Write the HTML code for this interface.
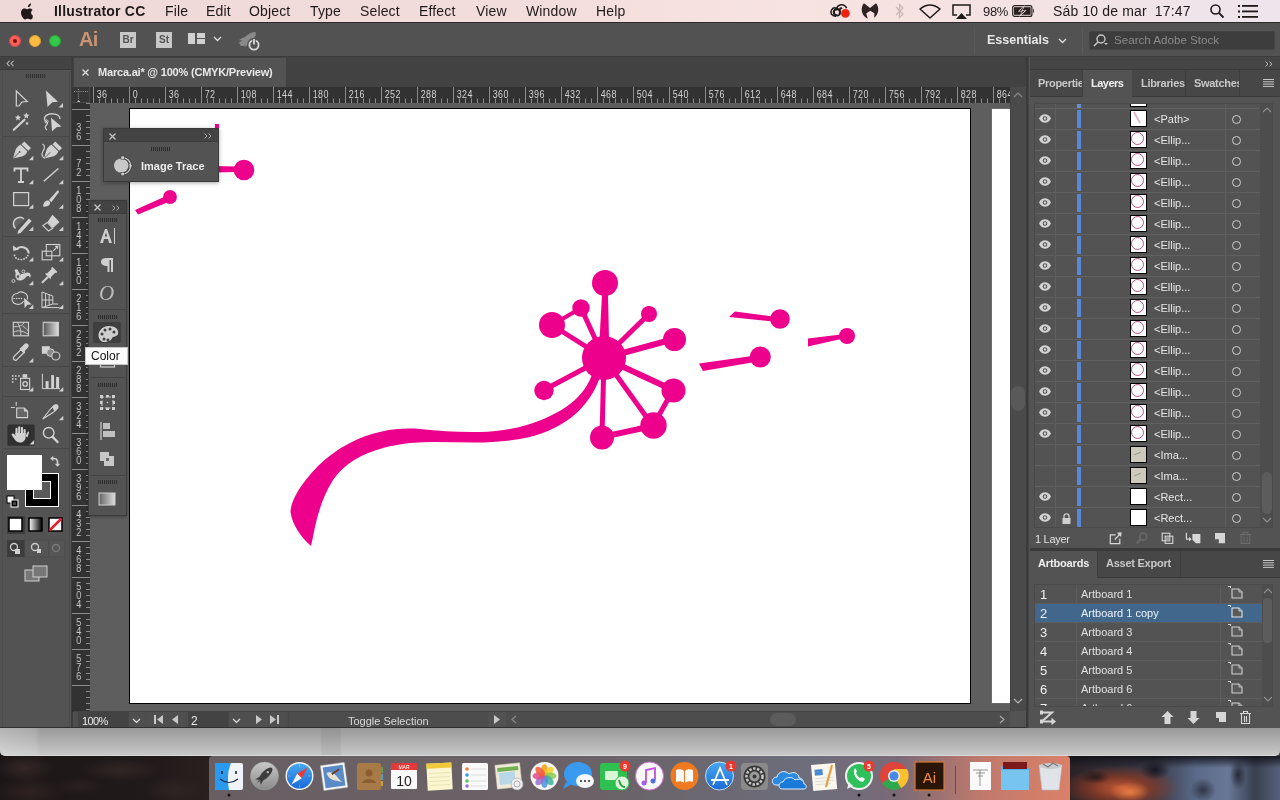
<!DOCTYPE html>
<html><head><meta charset="utf-8">
<style>
*{margin:0;padding:0;box-sizing:border-box}
html,body{width:1280px;height:800px;overflow:hidden;background:#2a2020;font-family:"Liberation Sans",sans-serif}
body>*{will-change:transform}
.a{position:absolute}
svg{position:absolute;overflow:visible}
#menubar{left:0;top:0;width:1280px;height:22px;background:linear-gradient(90deg,#efd8d8,#f3dddc 40%,#f7e3e0 62%,#f5e2e2 75%,#ede5ec);color:#1f1a1a;font-size:14px}
#menubar span{position:absolute;top:3px;white-space:nowrap;letter-spacing:0.15px}
#appbar{left:0;top:22px;width:1280px;height:35px;background:#525252;border-top:1px solid #2e2a2a;border-bottom:1px solid #3c3c3c}
#tools{left:0;top:57px;width:73px;height:671px;background:#535353}
#tabrow{left:73px;top:57px;width:953px;height:30px;background:#424242}
#canvas{left:75px;top:87px;width:935px;height:625px;background:#5b5b5b}
#rightp{left:1026px;top:57px;width:254px;height:671px;background:#535353}
#below{left:0;top:728px;width:1280px;height:24px;background:linear-gradient(#cfcfcf,#b5b5b5 60%,#a9a9a9)}
#dockbg{left:0;top:752px;width:1280px;height:48px;background:linear-gradient(90deg,#1e1616,#2a2020 40%,#4a3030 70%,#7a4030 85%,#3a3a48)}
.g{fill:#d8d8d8}
.gs{stroke:#d8d8d8;fill:none}
.tri{position:absolute;width:0;height:0;border-left:4px solid transparent;border-bottom:4px solid #d0d0d0}
</style></head><body>
<div id="dockbg" class="a"></div>
<div id="menubar" class="a">
  <svg style="left:20px;top:3px" width="15" height="17" viewBox="0 0 170 200"><path fill="#1f1a1a" d="M150 170c-8 12-17 24-30 24s-17-8-32-8-20 8-32 8-22-13-30-25C10 145 1 111 15 86c7-13 20-21 34-21 13 0 21 8 32 8s17-8 33-8c12 0 25 7 32 18-28 15-23 55 5 66-3 8-6 15-11 21zM117 35c6-8 11-18 10-29-9 0-20 6-27 14-6 7-11 17-10 28 10 1 20-5 27-13z"/></svg>
  <span style="left:54px;font-weight:bold;letter-spacing:0.2px">Illustrator CC</span>
  <span style="left:165px">File</span>
  <span style="left:206px">Edit</span>
  <span style="left:249px">Object</span>
  <span style="left:310px">Type</span>
  <span style="left:360px">Select</span>
  <span style="left:419px">Effect</span>
  <span style="left:476px">View</span>
  <span style="left:526px">Window</span>
  <span style="left:596px">Help</span>
  <!-- CC icon -->
  <svg style="left:829px;top:3px" width="22" height="16" viewBox="0 0 22 16">
    <path d="M7 13.2 C2.5 13.5 0.8 9.5 2.6 6.8 C3.8 5 6 4.6 7.6 5.2 C8.8 2 12.8 0.8 15.6 2.6 C16.6 3.2 17.3 4.2 17.6 5.2" fill="none" stroke="#1f1a1a" stroke-width="1.5"/>
    <circle cx="8" cy="9.3" r="3.2" fill="none" stroke="#1f1a1a" stroke-width="2.2"/>
    <path d="M6 8 L9.5 12" stroke="#f0dada" stroke-width="0.8"/>
    <path d="M10.5 6 L13 4.8" stroke="#1f1a1a" stroke-width="2"/>
    <circle cx="16.4" cy="10.4" r="4.6" fill="#f4e0e0"/>
    <circle cx="16.4" cy="10.4" r="4.3" fill="#f0200e"/>
  </svg>
  <!-- Malwarebytes -->
  <svg style="left:861px;top:3px" width="18" height="16" viewBox="0 0 18 16"><path d="M3 0.2 L9 5 L15 0.2 C18.2 4 18.4 10.5 13.2 14.8 L13.4 10.2 L9.2 7.8 L5.2 10.6 L6.8 15.8 C-0.4 12.2 -0.6 4 3 0.2Z" fill="#2e2222"/></svg>
  <!-- bluetooth faint -->
  <svg style="left:895px;top:3px" width="10" height="16" viewBox="0 0 10 16"><path d="M1 4 L8 11 L4.5 14.5 V1.5 L8 5 L1 12" fill="none" stroke="#c9b6b6" stroke-width="1.2"/></svg>
  <!-- wifi -->
  <svg style="left:919px;top:4px" width="22" height="15" viewBox="0 0 22 15"><path d="M1 5 Q11 -3 21 5 L11 14 Z" fill="none" stroke="#1f1a1a" stroke-width="1.5" stroke-linejoin="round"/></svg>
  <!-- airplay -->
  <svg style="left:952px;top:4px" width="19" height="15" viewBox="0 0 19 15"><path d="M5 11 H1 V1 H18 V11 H14" fill="none" stroke="#1f1a1a" stroke-width="1.5"/><path d="M4 15 L9.5 9 L15 15Z" fill="#1f1a1a"/></svg>
  <span style="left:983px;font-size:13px;letter-spacing:-0.3px;top:4px">98%</span>
  <!-- battery -->
  <svg style="left:1012px;top:5px" width="24" height="12" viewBox="0 0 24 12"><rect x="0.7" y="0.6" width="19.2" height="10.8" rx="2" fill="none" stroke="#2a2020" stroke-width="1.2"/><rect x="2" y="2.2" width="16.6" height="7.6" fill="#2a2020"/><path d="M12.8 0 L5.8 6.6 H9.6 L7.2 12 L14.6 5.2 H10.8 Z" fill="#f2dede"/><path d="M11.6 1.8 L7.6 5.8 H10.6 L8.8 9.6 L12.8 5.8 H9.8 Z" fill="#2a2020"/><path d="M21 3.8 C22.2 4.2 22.2 7.8 21 8.2Z" fill="#2a2020"/></svg>
  <span style="left:1053px">Sáb 10 de mar&nbsp; 17:47</span>
  <svg style="left:1210px;top:4px" width="14" height="14" viewBox="0 0 14 14"><circle cx="5.5" cy="5.5" r="4.5" fill="none" stroke="#1f1a1a" stroke-width="1.6"/><path d="M9 9 L13.5 13.5" stroke="#1f1a1a" stroke-width="1.8"/></svg>
  <svg style="left:1238px;top:5px" width="20" height="13" viewBox="0 0 20 13"><g fill="#1f1a1a"><rect x="0" y="0" width="2" height="2"/><rect x="0" y="5.5" width="2" height="2"/><rect x="0" y="11" width="2" height="2"/><rect x="4" y="0" width="16" height="1.8"/><rect x="4" y="5.5" width="16" height="1.8"/><rect x="4" y="11" width="16" height="1.8"/></g></svg>
</div>
<div id="appbar" class="a">
  <div class="a" style="left:9px;top:12px;width:12px;height:12px;border-radius:50%;background:#fc605c;border:1px solid #de4a46"><div class="a" style="left:3px;top:3px;width:4px;height:4px;border-radius:50%;background:#7a0a08"></div></div>
  <div class="a" style="left:29px;top:12px;width:12px;height:12px;border-radius:50%;background:#fdbc40;border:1px solid #de9f34"></div>
  <div class="a" style="left:49px;top:12px;width:12px;height:12px;border-radius:50%;background:#34c84a;border:1px solid #27aa35"></div>
  <div class="a" style="left:79px;top:5px;font-size:20px;font-weight:bold;color:#c99474;letter-spacing:-0.8px">Ai</div>
  <div class="a" style="left:120px;top:9px;width:16px;height:16px;background:#c8c8c8;color:#555;font-size:10px;font-weight:bold;text-align:center;line-height:16px">Br</div>
  <div class="a" style="left:156px;top:9px;width:16px;height:16px;background:#c8c8c8;color:#555;font-size:10px;font-weight:bold;text-align:center;line-height:16px">St</div>
  <div class="a" style="left:188px;top:10px;width:7px;height:11px;background:#d0d0d0"></div>
  <div class="a" style="left:197px;top:10px;width:8px;height:5px;background:#d0d0d0"></div>
  <div class="a" style="left:197px;top:16px;width:8px;height:5px;background:#d0d0d0"></div>
  <svg style="left:213px;top:13px" width="9" height="6" viewBox="0 0 9 6"><path d="M1 1 L4.5 4.5 L8 1" fill="none" stroke="#e0e0e0" stroke-width="1.3"/></svg>
  <svg style="left:236px;top:6px" width="28" height="24" viewBox="0 0 28 24"><g fill="#8a8a8a"><ellipse cx="12" cy="10" rx="10" ry="3.6" transform="rotate(-40 12 10)"/><path d="M3 11 L8 8 L9 12Z M8 18 L11 13 L14 15Z"/><path d="M2 14 L6 12 L5 15Z"/></g><circle cx="18" cy="16" r="5" fill="none" stroke="#525252" stroke-width="4"/><circle cx="18" cy="16" r="4.6" fill="none" stroke="#d8d8d8" stroke-width="1.8"/><path d="M18 9.5 V15.5" stroke="#525252" stroke-width="3.4"/><path d="M18 10 V15.5" stroke="#d8d8d8" stroke-width="1.8"/></svg>
  <div class="a" style="left:974px;top:4px;width:1px;height:27px;background:#5a5a5a"></div>
  <div class="a" style="left:987px;top:10px;font-size:12.5px;font-weight:bold;color:#e6e6e6">Essentials</div>
  <svg style="left:1058px;top:15px" width="9" height="6" viewBox="0 0 9 6"><path d="M1 1 L4.5 4.5 L8 1" fill="none" stroke="#e0e0e0" stroke-width="1.3"/></svg>
  <div class="a" style="left:1082px;top:4px;width:1px;height:27px;background:#5a5a5a"></div>
  <div class="a" style="left:1089px;top:8px;width:186px;height:19px;background:#3d3d3d;border:1px solid #444;border-radius:2px"></div>
  <svg style="left:1093px;top:11px" width="16" height="13" viewBox="0 0 16 13"><circle cx="8" cy="5" r="4" fill="none" stroke="#c8c8c8" stroke-width="1.4"/><path d="M5 8 L1 12" stroke="#c8c8c8" stroke-width="1.6"/><path d="M11 9 H15 L13 11Z" fill="#c8c8c8"/></svg>
  <div class="a" style="left:1114px;top:10px;font-size:11.6px;color:#8a8a8a">Search Adobe Stock</div>
</div>
<div id="tools" class="a">
  <div class="a" style="left:0;top:0;width:73px;height:13px;background:#434343;border-bottom:1px solid #383838"></div>
  <svg style="left:6px;top:3px" width="9" height="7" viewBox="0 0 9 7"><path d="M3.5 0.8 L1 3.5 L3.5 6.2 M7.5 0.8 L5 3.5 L7.5 6.2" fill="none" stroke="#b8b8b8" stroke-width="1.1"/></svg>
  <div class="a" style="left:71px;top:0;width:2px;height:671px;background:#3d3d3d"></div>
  <div class="a" style="left:2px;top:14px;width:68px;height:660px;border-left:1px solid #4c4c4c;border-right:1px solid #4c4c4c"></div>
  <div class="a" style="left:26px;top:17px;width:20px;height:4px;background:repeating-linear-gradient(90deg,#2e2e2e 0 1px,transparent 1px 2px)"></div>
  <!-- separators -->
  <div class="a" style="left:3px;top:79px;width:67px;height:1px;background:#474747"></div>
  <div class="a" style="left:3px;top:179px;width:67px;height:1px;background:#474747"></div>
  <div class="a" style="left:3px;top:256px;width:67px;height:1px;background:#474747"></div>
  <div class="a" style="left:3px;top:309px;width:67px;height:1px;background:#474747"></div>
  <div class="a" style="left:3px;top:339px;width:67px;height:1px;background:#474747"></div>
  <div class="a" style="left:3px;top:391px;width:67px;height:1px;background:#474747"></div>
</div>
<!-- tool icons in page coords -->
<svg style="left:0;top:80px" width="73" height="520" viewBox="0 80 73 520">
  <g fill="#d2d2d2" stroke="#d2d2d2">
  <!-- selection outline -->
  <path d="M16.3 91 L27.3 101.5 L22 102 L19 106 L16.3 106Z" fill="none" stroke-width="1.2" stroke-linejoin="miter"/>
  <!-- direct selection filled -->
  <path d="M46 90.5 L58 101.8 L52.3 102.3 L47.5 107Z" stroke="none"/>
  <!-- magic wand -->
  <path d="M13.8 129.8 L24.5 119.8" stroke-width="2.2" stroke-linecap="round"/>
  <path d="M18 114.5 l0.9 2.1 2.2 0.2 -1.7 1.4 0.5 2.2 -1.9-1.2 -1.9 1.2 0.5-2.2 -1.7-1.4 2.2-0.2z M26.3 112.5 l0.9 2.1 2.2 0.2 -1.7 1.4 0.5 2.2 -1.9-1.2 -1.9 1.2 0.5-2.2 -1.7-1.4 2.2-0.2z M27 121.5 l0.6 1.2 1.3 0.1 -1 0.8 0.3 1.3 -1.2-0.7 -1.2 0.7 0.3-1.3 -1-0.8 1.3-0.1z" stroke="none"/>
  <!-- lasso -->
  <path d="M45 120.5 C43 116 48 113.5 53 113.8 C57 114 60 116 60 119" fill="none" stroke-width="1.3"/>
  <path d="M45 120.5 C48 122 48 124 46 125.5 C44.5 127 45.5 129 47 130" fill="none" stroke-width="1.2"/>
  <circle cx="46.5" cy="121.5" r="1.6" fill="none" stroke-width="1"/>
  <path d="M51 117.8 L61.5 126.5 L56.5 127.2 L52 131.2Z" stroke="none"/>
  <!-- pen -->
  <path d="M13 158.5 L15.3 150.5 Q16.6 146.6 21.2 144.6 L27.6 151 Q25.8 155.6 21.8 156.6Z" stroke="none"/>
  <path d="M21.6 144.2 L24.3 141.4 L31 148 L28.2 150.8Z" stroke="none"/>
  <path d="M20.8 144.6 L28 151.6" stroke="#535353" stroke-width="0.9"/>
  <path d="M13.4 158.2 L19.2 152.3" stroke="#535353" stroke-width="0.9"/>
  <circle cx="19.6" cy="151.9" r="0.9" fill="#535353" stroke="none"/>
  <!-- curvature pen -->
  <path d="M44 158.5 L46.3 150.5 Q47.6 146.6 52.2 144.6 L58.6 151 Q56.8 155.6 52.8 156.6Z" stroke="none"/>
  <path d="M52.6 144.2 L55.3 141.4 L62 148 L59.2 150.8Z" stroke="none"/>
  <path d="M51.8 144.6 L59 151.6" stroke="#535353" stroke-width="0.9"/>
  <path d="M44.4 158.2 L50.2 152.3" stroke="#535353" stroke-width="0.9"/>
  <path d="M42.5 144 C45.5 145.5 44.5 149 42.8 151.5 C41 154.5 42.5 157.5 45 158.3" fill="none" stroke-width="1.1"/>
  <!-- type T -->
  <path d="M14.5 171.5 V168.5 H27.5 V171.5 M21 168.5 V182 M18 182 H24" fill="none" stroke-width="1.8"/>
  <!-- line -->
  <path d="M43.8 181.3 L58.4 168.5" stroke-width="1.4"/>
  <!-- rectangle -->
  <rect x="13.6" y="192.6" width="15" height="13" fill="#5e5e5e" stroke-width="1.2"/>
  <!-- paintbrush -->
  <path d="M43 206.6 C43.5 202 45.5 200.5 48.5 200.5 L50 202 C50.5 205 48 207 43 206.6Z" stroke="none"/>
  <path d="M49 200 L57 191 C58 190 59.5 191 58.8 192.2 L51.3 202.3Z" stroke="none"/>
  <!-- shaper -->
  <path d="M24 219 A6.2 6.2 0 1 0 15.5 228.5" fill="#626262" stroke-width="1.5"/>
  <path d="M18.2 230.8 L29 218.6 L31.6 221 L20.6 233Z M18.2 230.8 L17.4 233.8 L20.6 233Z" stroke="none"/>
  <!-- eraser -->
  <path d="M47.5 222 L52.4 214.8 L59.6 221.9 L53 228Z" stroke="none"/>
  <path d="M47.3 222.5 L52.7 228.3 L48.4 231 L42.9 225.6Z" fill="none" stroke-width="1.1"/>
  <!-- rotate -->
  <path d="M16.5 249.2 A7.2 7.2 0 0 1 28.8 253.5" fill="none" stroke-width="2"/>
  <path d="M12.8 245.4 L13.4 251 L19 249.5Z" stroke="none"/>
  <g stroke="none"><circle cx="14.5" cy="255.5" r="0.9"/><circle cx="16" cy="258" r="0.9"/><circle cx="18.5" cy="259.2" r="0.9"/><circle cx="21.3" cy="259.6" r="0.9"/><circle cx="24" cy="259" r="0.9"/><circle cx="26.3" cy="257.7" r="0.9"/><circle cx="27.8" cy="255.6" r="0.9"/></g>
  <!-- scale -->
  <rect x="46.3" y="244.5" width="13.5" height="11.3" fill="none" stroke-width="1.1"/>
  <rect x="42.2" y="251.2" width="9.6" height="8.6" fill="none" stroke-width="1.1"/>
  <path d="M53.4 250.8 L57.8 246.2" stroke-width="1.1"/><path d="M58.4 245.5 L54.6 246 L57.9 249.3Z" stroke="none"/>
  <!-- puppet warp -->
  <path d="M14.5 270.5 C15.5 268.5 18 269 18.5 271.5 C19.5 274 21.5 274.5 24 273.5 C26 272.5 28 272 29.5 273 C31 274 31 276.5 30 278 C29.5 276 28 275.5 26.5 276.5 C25 278.5 23 280.5 20 280.5 C17 280.5 15.5 278.5 15.5 276 C15.5 274 16 272 14.5 270.5Z" stroke="none"/>
  <path d="M13.4 281 L23.4 271.4" stroke="#535353" stroke-width="0.9"/>
  <circle cx="23.4" cy="271.4" r="1.5" fill="#535353" stroke-width="0.9"/>
  <circle cx="18" cy="276.6" r="1.9" fill="#535353" stroke-width="1.1"/>
  <circle cx="13.4" cy="281" r="1.5" fill="#535353" stroke-width="0.9"/>
  <!-- pin -->
  <path d="M45 273.8 L47.5 273 L51.5 269 L51.2 267.8 L52.4 266.9 L57.3 271.8 L56.4 273 L55.2 272.7 L51.2 276.7 L50.4 279.2 Z" stroke="none"/>
  <path d="M42.4 282.4 L47.6 277.2" stroke-width="2" stroke-linecap="round"/>
  <!-- shape builder -->
  <path d="M19 304.5 C14.5 304.5 12 302 12 298.8 C12 295.5 14.5 293.3 17.5 293.5 C19 291.8 22 291.6 24.2 292.8 C27 294.2 28 297 27.3 299.5" fill="none" stroke-width="1.1"/>
  <path d="M17.4 304.5 C20 304.5 22.5 303 23.5 301" fill="none" stroke-width="1.1"/>
  <g stroke="none"><circle cx="14.3" cy="298.5" r="0.8"/><circle cx="16.7" cy="298.5" r="0.8"/><circle cx="19.1" cy="298.5" r="0.8"/><circle cx="21.5" cy="298.5" r="0.8"/></g>
  <path d="M24 297.8 L31.8 304.4 L27.6 304.8 L24.6 308Z" stroke="none"/>
  <!-- perspective grid -->
  <path d="M42 292 L52.8 296 V304 L42 307.6Z M45.6 293.3 V306.4 M49.2 294.6 V305.2 M42 300 H52.8 M42 307.6 H59.5 M52.8 304 H58" fill="none" stroke-width="1"/>
  <!-- mesh -->
  <rect x="13.3" y="322.3" width="15.2" height="13.5" fill="#5c5c5c" stroke-width="1.1"/>
  <path d="M14 332 C18 330 22 330.5 28 334 M13.5 326.5 C17 327 21 326.5 24 323 M17.5 322.5 C19.5 326 21.5 330 20.5 335.5 M22.5 326 C25 327.5 27 329 28 331" fill="none" stroke-width="0.9"/>
  <!-- gradient tool -->
  <rect x="43.2" y="322.3" width="15.2" height="13.5" fill="url(#gr1)" stroke-width="1.1"/>
  <!-- eyedropper -->
  <path d="M14.3 359.8 C13 358.5 13.2 357.3 14.2 356.3 L21.5 349 L24.5 352 L17.2 359.3 C16.3 360.3 15.3 360.6 14.3 359.8Z" fill="none" stroke-width="1.2"/>
  <path d="M20.5 348 L24 344.5 C25.3 343 27 343 28 344 C29 345 29 346.6 27.6 348 L24.2 351.5 L25.2 352.5 L24 353.6 L19.4 349 L20.5 348Z" stroke="none"/>
  <!-- blend -->
  <rect x="41.9" y="346.2" width="7.9" height="7.6" stroke="none"/>
  <circle cx="50.5" cy="352.6" r="3.8" fill="#8a8a8a" stroke-width="1"/>
  <circle cx="55.8" cy="356" r="4" fill="#535353" stroke-width="1.1"/>
  <!-- symbol sprayer -->
  <g stroke="none"><rect x="11.9" y="375.2" width="1.6" height="1.6"/><rect x="14.9" y="375.2" width="1.6" height="1.6"/><rect x="18.1" y="375.2" width="1.6" height="1.6"/><rect x="11.9" y="378.2" width="1.6" height="1.6"/><rect x="14.9" y="378.2" width="1.6" height="1.6"/><rect x="11.9" y="381.2" width="1.6" height="1.6"/></g>
  <rect x="20.6" y="378.3" width="9" height="11.2" fill="none" stroke-width="1.1"/>
  <rect x="22.6" y="374.2" width="4.6" height="3.6" stroke="none"/>
  <circle cx="25.1" cy="383.9" r="2.2" fill="none" stroke-width="1.3"/>
  <!-- column graph -->
  <path d="M42.4 373.8 V388.6 H59.9" fill="none" stroke-width="1"/>
  <rect x="45.6" y="381.1" width="3" height="7" stroke="none"/><rect x="51.2" y="375.1" width="2.8" height="13" stroke="none"/><rect x="56.1" y="377" width="3" height="11.1" stroke="none"/>
  <!-- artboard -->
  <path d="M11 407.5 H14.8 M16.2 402 V405.8" fill="none" stroke-width="1.1"/>
  <path d="M16.7 408 H24.3 L27.6 411.2 V417.6 H16.7Z" fill="#666" stroke-width="1.1"/>
  <path d="M24.3 408 V411.2 H27.6" fill="#d2d2d2" stroke-width="0.8"/>
  <!-- slice -->
  <path d="M42.7 419 L50.5 409 L54 405.5 C55.5 404.2 57.5 404.5 58 406.2 C58.3 407.4 57.8 408.5 56.5 409.6 L53 412.5 Z" fill="none" stroke-width="1.1"/>
  <path d="M54 405.5 C55.5 404.2 57.5 404.5 58 406.2 C58.3 407.4 57.8 408.5 56.5 409.6 L54.5 411.2 L52.3 407.3Z" stroke="none"/>
  <!-- hand -->
  <rect x="7.4" y="424.4" width="27.3" height="21.3" rx="1.5" fill="#303030" stroke="none"/>
  <path d="M16.5 434 V428.8 M19.2 433 V427.2 M22 433 V427.9 M24.6 434 V430" stroke-width="2.1" stroke-linecap="round"/>
  <path d="M15.3 433 H25.7 V436.5 C25.7 440 23.5 442.6 20 442.6 C17.2 442.6 15.7 441 14.5 439.2 L12 435.6 C11.4 434.8 11.8 433.8 12.6 433.6 C13.3 433.4 14 433.8 14.5 434.5 L15.5 436Z" stroke="none"/>
  <path d="M25.5 436 L27.5 432.2 C28 431.2 29.2 431.4 29 432.6 L27.5 437.5" stroke="none"/>
  <!-- zoom -->
  <circle cx="48.7" cy="432.8" r="5.3" fill="none" stroke-width="1.4"/>
  <path d="M52.6 436.8 L57.6 442" stroke-width="2.4" stroke-linecap="round"/>
  </g>
  <g fill="#d0d0d0">
  <path d="M58.5 107.5 h4.5 v-4.5z M28.8 160.2 h4.5 v-4.5z M58.8 160.2 h4.5 v-4.5z M28.8 184.2 h4.5 v-4.5z M58.8 184.2 h4.5 v-4.5z M28.8 208.8 h4.5 v-4.5z M58.8 208.8 h4.5 v-4.5z M28.8 231 h4.5 v-4.5z M58.8 231 h4.5 v-4.5z M28.8 261.5 h4.5 v-4.5z M58.8 261.5 h4.5 v-4.5z M28.8 285.2 h4.5 v-4.5z M58.8 285.2 h4.5 v-4.5z M28.8 309 h4.5 v-4.5z M58.8 309 h4.5 v-4.5z M28.8 362.6 h4.5 v-4.5z M28.8 391.6 h4.5 v-4.5z M58.8 391.6 h4.5 v-4.5z M58.8 420.3 h4.5 v-4.5z M29.6 444.6 h4.5 v-4.5z"/>
  </g>
  <defs><linearGradient id="gr1" x1="0" x2="1"><stop offset="0" stop-color="#555"/><stop offset="1" stop-color="#ddd"/></linearGradient>
  <linearGradient id="gr2" x1="0" x2="1"><stop offset="0" stop-color="#fff"/><stop offset="1" stop-color="#000"/></linearGradient></defs>
  <!-- fill/stroke -->
  <rect x="25" y="473" width="34" height="34" fill="#fff"/>
  <rect x="26" y="474" width="32" height="32" fill="#000"/>
  <rect x="33" y="481" width="18" height="18" fill="#fff"/>
  <rect x="34" y="482" width="16" height="16" fill="#5a5a5a"/>
  <rect x="7" y="455" width="35" height="35" fill="#fff"/>
  <path d="M52.5 458.5 H54 C56.3 458.5 57.5 459.8 57.5 462 V464" fill="none" stroke="#d0d0d0" stroke-width="1.6"/><path d="M50.3 458.5 L53.3 455.8 L53.3 461.2Z M57.5 466.8 L54.8 463.8 L60.2 463.8Z" fill="#d0d0d0"/>
  <rect x="7" y="496" width="7" height="7" fill="#fff" stroke="#000" stroke-width="1"/>
  <rect x="11" y="500" width="7" height="7" fill="#000" stroke="#fff" stroke-width="1"/>
  <rect x="13" y="502" width="3" height="3" fill="#444"/>
  <!-- color/gradient/none -->
  <rect x="7" y="516" width="18" height="18" fill="#3c3c3c"/>
  <rect x="9" y="518" width="13" height="13" fill="#fff" stroke="#000" stroke-width="1.5"/>
  <rect x="29" y="518" width="13" height="13" fill="url(#gr2)" stroke="#000" stroke-width="1.5"/>
  <rect x="49" y="518" width="13" height="13" fill="#fff" stroke="#000" stroke-width="1.5"/>
  <path d="M49.5 530.5 L61.5 518.5" stroke="#e0202a" stroke-width="2.5"/>
  <!-- draw modes -->
  <rect x="7" y="540" width="18" height="17" fill="#3c3c3c"/>
  <rect x="25" y="540" width="24" height="17" fill="#555" stroke="#4e4e4e"/>
  <rect x="49" y="540" width="16" height="17" fill="#555" stroke="#4e4e4e"/>
  <circle cx="14" cy="547" r="3.5" fill="none" stroke="#d0d0d0" stroke-width="1.3"/><rect x="15" y="549" width="5" height="5" fill="#d0d0d0"/>
  <circle cx="35" cy="547" r="3.5" fill="none" stroke="#d0d0d0" stroke-width="1.3"/><rect x="37" y="549" width="4" height="4" fill="#d0d0d0"/>
  <circle cx="56" cy="548" r="3.5" fill="none" stroke="#7a7a7a" stroke-width="1.3"/>
  <!-- screen mode -->
  <rect x="25" y="570" width="14" height="11" fill="#777" stroke="#d0d0d0" stroke-width="1"/>
  <rect x="33" y="566" width="14" height="11" fill="#777" stroke="#d0d0d0" stroke-width="1"/>
</svg>
<div id="tabrow" class="a">
  <div class="a" style="left:1px;top:1px;width:212px;height:29px;background:#535353"></div>
  <svg style="left:9px;top:12px" width="7" height="7" viewBox="0 0 7 7"><path d="M0.5 0.5 L6.5 6.5 M6.5 0.5 L0.5 6.5" stroke="#e0e0e0" stroke-width="1.3"/></svg>
  <div class="a" style="left:25px;top:9px;font-size:11px;font-weight:bold;color:#e8e8e8;white-space:nowrap;letter-spacing:-0.2px">Marca.ai* @ 100% (CMYK/Preview)</div>
</div>
<div class="a" style="left:73px;top:87px;width:937px;height:625px;background:#5e5e5e"></div>
<!-- artboards -->
<div class="a" style="left:129px;top:108px;width:842px;height:596px;background:#fff;border:1px solid #000"></div>
<div class="a" style="left:991px;top:108px;width:30px;height:596px;background:#fff;border:1px solid #6a6a6a"></div>
<!-- artwork -->
<svg style="left:0;top:0" width="1280" height="800" viewBox="0 0 1280 800">
 <g fill="#ec008c" stroke="#ec008c" stroke-linecap="butt">
  <!-- hub spokes -->
  <path d="M602 295 L608 295 L609 340 L599.5 340Z" stroke="none"/>
  <path d="M581 308 L604 358" stroke-width="5"/>
  <path d="M552 325 L604 358" stroke-width="5"/>
  <path d="M581 308 L552 325" stroke-width="4"/>
  <path d="M649 314 L604 358" stroke-width="5"/>
  <path d="M674 339 L604 358" stroke-width="6"/>
  <path d="M673 390 L604 358" stroke-width="6"/>
  <path d="M544 390 L604 358" stroke-width="5"/>
  <path d="M602 437 L604 358" stroke-width="5"/>
  <path d="M653 426 L604 358" stroke-width="5"/>
  <path d="M602 437 L653 426" stroke-width="6"/>
  <path d="M653 426 L673 390" stroke-width="5"/>
  <circle cx="605" cy="283" r="13" stroke="none"/>
  <circle cx="581" cy="308" r="8.7" stroke="none"/>
  <circle cx="552" cy="325" r="13" stroke="none"/>
  <circle cx="604" cy="358" r="22" stroke="none"/>
  <circle cx="649" cy="314" r="8" stroke="none"/>
  <circle cx="674.5" cy="339.5" r="11.5" stroke="none"/>
  <circle cx="673.5" cy="390.5" r="12" stroke="none"/>
  <circle cx="544" cy="390.5" r="9.7" stroke="none"/>
  <circle cx="602" cy="437.5" r="12" stroke="none"/>
  <circle cx="653.5" cy="425.5" r="13.2" stroke="none"/>
  <!-- swoosh -->
  <path stroke="none" d="M594 368 C588 393 568 411 533 423 C500 435 460 433 420 429 C380 426 345 440 318 466 C300 485 291 500 290.5 512 C292 525 302 538 311 546 C314 535 317 505 333 480 C348 458 375 447 410 443 C445 440 480 446 520 439 C560 432 590 410 601 374Z"/>
  <!-- sticks -->
  <path stroke="none" d="M735 311.5 L773 316.5 L773 321.5 L729 317Z"/>
  <circle cx="780" cy="319" r="9.8" stroke="none"/>
  <path stroke="none" d="M699 363.5 L752 356 L752 362.5 L703 371Z"/>
  <circle cx="760.3" cy="357" r="10.5" stroke="none"/>
  <path stroke="none" d="M808 338.5 L841 334.5 L841 339 L808 346.5Z"/>
  <circle cx="847" cy="336" r="8" stroke="none"/>
  <path stroke="none" d="M215 124 L219 124 L219 130 L215 130Z"/>
  <path stroke="none" d="M215 166 L236 166.5 L236 172 L215 172.5Z"/>
  <circle cx="244" cy="170" r="10.3" stroke="none"/>
  <path stroke="none" d="M135 210 L164 197 L166 203 L138 214.5Z"/>
  <circle cx="170" cy="197" r="6.9" stroke="none"/>
 </g>
</svg>
<svg style="left:0;top:0" width="1280" height="800" viewBox="0 0 1280 800">
<rect x="72" y="87" width="938" height="16" fill="#323232"/>
<rect x="72" y="103" width="18" height="609" fill="#323232"/>
<rect x="72" y="87" width="17" height="16" fill="#363636"/>
<path d="M74 91.5 H88 M78.5 89 V101" stroke="#9a9a9a" stroke-width="1" stroke-dasharray="1 1.2"/><path d="M77.5 101.5 H80" stroke="#c8c8c8" stroke-width="1"/>
<path d="M89.5 87 V103 M72 102.5 H90" stroke="#4a4a4a" stroke-width="1"/>
<path d="M93.5 87V103M99.5 98.5V103M105.5 98.5V103M111.5 98.5V103M117.5 98.5V103M123.5 98.5V103M129.5 87V103M135.5 98.5V103M141.5 98.5V103M147.5 98.5V103M153.5 98.5V103M159.5 98.5V103M165.5 87V103M171.5 98.5V103M177.5 98.5V103M183.5 98.5V103M189.5 98.5V103M195.5 98.5V103M201.5 87V103M207.5 98.5V103M213.5 98.5V103M219.5 98.5V103M225.5 98.5V103M231.5 98.5V103M237.5 87V103M243.5 98.5V103M249.5 98.5V103M255.5 98.5V103M261.5 98.5V103M267.5 98.5V103M273.5 87V103M279.5 98.5V103M285.5 98.5V103M291.5 98.5V103M297.5 98.5V103M303.5 98.5V103M309.5 87V103M315.5 98.5V103M321.5 98.5V103M327.5 98.5V103M333.5 98.5V103M339.5 98.5V103M345.5 87V103M351.5 98.5V103M357.5 98.5V103M363.5 98.5V103M369.5 98.5V103M375.5 98.5V103M381.5 87V103M387.5 98.5V103M393.5 98.5V103M399.5 98.5V103M405.5 98.5V103M411.5 98.5V103M417.5 87V103M423.5 98.5V103M429.5 98.5V103M435.5 98.5V103M441.5 98.5V103M447.5 98.5V103M453.5 87V103M459.5 98.5V103M465.5 98.5V103M471.5 98.5V103M477.5 98.5V103M483.5 98.5V103M489.5 87V103M495.5 98.5V103M501.5 98.5V103M507.5 98.5V103M513.5 98.5V103M519.5 98.5V103M525.5 87V103M531.5 98.5V103M537.5 98.5V103M543.5 98.5V103M549.5 98.5V103M555.5 98.5V103M561.5 87V103M567.5 98.5V103M573.5 98.5V103M579.5 98.5V103M585.5 98.5V103M591.5 98.5V103M597.5 87V103M603.5 98.5V103M609.5 98.5V103M615.5 98.5V103M621.5 98.5V103M627.5 98.5V103M633.5 87V103M639.5 98.5V103M645.5 98.5V103M651.5 98.5V103M657.5 98.5V103M663.5 98.5V103M669.5 87V103M675.5 98.5V103M681.5 98.5V103M687.5 98.5V103M693.5 98.5V103M699.5 98.5V103M705.5 87V103M711.5 98.5V103M717.5 98.5V103M723.5 98.5V103M729.5 98.5V103M735.5 98.5V103M741.5 87V103M747.5 98.5V103M753.5 98.5V103M759.5 98.5V103M765.5 98.5V103M771.5 98.5V103M777.5 87V103M783.5 98.5V103M789.5 98.5V103M795.5 98.5V103M801.5 98.5V103M807.5 98.5V103M813.5 87V103M819.5 98.5V103M825.5 98.5V103M831.5 98.5V103M837.5 98.5V103M843.5 98.5V103M849.5 87V103M855.5 98.5V103M861.5 98.5V103M867.5 98.5V103M873.5 98.5V103M879.5 98.5V103M885.5 87V103M891.5 98.5V103M897.5 98.5V103M903.5 98.5V103M909.5 98.5V103M915.5 98.5V103M921.5 87V103M927.5 98.5V103M933.5 98.5V103M939.5 98.5V103M945.5 98.5V103M951.5 98.5V103M957.5 87V103M963.5 98.5V103M969.5 98.5V103M975.5 98.5V103M981.5 98.5V103M987.5 98.5V103M993.5 87V103M999.5 98.5V103M1005.5 98.5V103" stroke="#8c8c8c" stroke-width="1"/>
<g font-family="Liberation Sans" font-size="10.5" letter-spacing="0.5" fill="#d2d2d2" clip-path="url(#hclip)"><g transform="scale(0.85,1)"><text x="113.76" y="98">36</text><text x="156.12" y="98">0</text><text x="198.47" y="98">36</text><text x="240.82" y="98">72</text><text x="283.18" y="98">108</text><text x="325.53" y="98">144</text><text x="367.88" y="98">180</text><text x="410.24" y="98">216</text><text x="452.59" y="98">252</text><text x="494.94" y="98">288</text><text x="537.29" y="98">324</text><text x="579.65" y="98">360</text><text x="622.00" y="98">396</text><text x="664.35" y="98">432</text><text x="706.71" y="98">468</text><text x="749.06" y="98">504</text><text x="791.41" y="98">540</text><text x="833.76" y="98">576</text><text x="876.12" y="98">612</text><text x="918.47" y="98">648</text><text x="960.82" y="98">684</text><text x="1003.18" y="98">720</text><text x="1045.53" y="98">756</text><text x="1087.88" y="98">792</text><text x="1130.24" y="98">828</text><text x="1172.59" y="98">864</text></g></g>
<defs><clipPath id="hclip"><rect x="90" y="87" width="920" height="16"/></clipPath><clipPath id="vclip"><rect x="72" y="103" width="18" height="609"/></clipPath></defs>
<path d="M86 103.5H90M72 109.5H90M86 115.5H90M86 121.5H90M86 127.5H90M86 133.5H90M86 139.5H90M72 145.5H90M86 151.5H90M86 157.5H90M86 163.5H90M86 169.5H90M86 175.5H90M72 181.5H90M86 187.5H90M86 193.5H90M86 199.5H90M86 205.5H90M86 211.5H90M72 217.5H90M86 223.5H90M86 229.5H90M86 235.5H90M86 241.5H90M86 247.5H90M72 253.5H90M86 259.5H90M86 265.5H90M86 271.5H90M86 277.5H90M86 283.5H90M72 289.5H90M86 295.5H90M86 301.5H90M86 307.5H90M86 313.5H90M86 319.5H90M72 325.5H90M86 331.5H90M86 337.5H90M86 343.5H90M86 349.5H90M86 355.5H90M72 361.5H90M86 367.5H90M86 373.5H90M86 379.5H90M86 385.5H90M86 391.5H90M72 397.5H90M86 403.5H90M86 409.5H90M86 415.5H90M86 421.5H90M86 427.5H90M72 433.5H90M86 439.5H90M86 445.5H90M86 451.5H90M86 457.5H90M86 463.5H90M72 469.5H90M86 475.5H90M86 481.5H90M86 487.5H90M86 493.5H90M86 499.5H90M72 505.5H90M86 511.5H90M86 517.5H90M86 523.5H90M86 529.5H90M86 535.5H90M72 541.5H90M86 547.5H90M86 553.5H90M86 559.5H90M86 565.5H90M86 571.5H90M72 577.5H90M86 583.5H90M86 589.5H90M86 595.5H90M86 601.5H90M86 607.5H90M72 613.5H90M86 619.5H90M86 625.5H90M86 631.5H90M86 637.5H90M86 643.5H90M72 649.5H90M86 655.5H90M86 661.5H90M86 667.5H90M86 673.5H90M86 679.5H90M72 685.5H90M86 691.5H90M86 697.5H90M86 703.5H90M86 709.5H90" stroke="#8c8c8c" stroke-width="1"/>
<g font-family="Liberation Sans" font-size="10.5" fill="#cccccc" clip-path="url(#vclip)"><g transform="scale(0.85,1)"><text x="89.76" y="131.0">3</text><text x="89.76" y="140.0">6</text><text x="89.76" y="167.0">7</text><text x="89.76" y="176.0">2</text><text x="89.76" y="194.0">1</text><text x="89.76" y="203.0">0</text><text x="89.76" y="212.0">8</text><text x="89.76" y="230.0">1</text><text x="89.76" y="239.0">4</text><text x="89.76" y="248.0">4</text><text x="89.76" y="266.0">1</text><text x="89.76" y="275.0">8</text><text x="89.76" y="284.0">0</text><text x="89.76" y="302.0">2</text><text x="89.76" y="311.0">1</text><text x="89.76" y="320.0">6</text><text x="89.76" y="338.0">2</text><text x="89.76" y="347.0">5</text><text x="89.76" y="356.0">2</text><text x="89.76" y="374.0">2</text><text x="89.76" y="383.0">8</text><text x="89.76" y="392.0">8</text><text x="89.76" y="410.0">3</text><text x="89.76" y="419.0">2</text><text x="89.76" y="428.0">4</text><text x="89.76" y="446.0">3</text><text x="89.76" y="455.0">6</text><text x="89.76" y="464.0">0</text><text x="89.76" y="482.0">3</text><text x="89.76" y="491.0">9</text><text x="89.76" y="500.0">6</text><text x="89.76" y="518.0">4</text><text x="89.76" y="527.0">3</text><text x="89.76" y="536.0">2</text><text x="89.76" y="554.0">4</text><text x="89.76" y="563.0">6</text><text x="89.76" y="572.0">8</text><text x="89.76" y="590.0">5</text><text x="89.76" y="599.0">0</text><text x="89.76" y="608.0">4</text><text x="89.76" y="626.0">5</text><text x="89.76" y="635.0">4</text><text x="89.76" y="644.0">0</text><text x="89.76" y="662.0">5</text><text x="89.76" y="671.0">7</text><text x="89.76" y="680.0">6</text></g></g>
</svg><!-- Image Trace floating panel -->
<div class="a" style="left:103px;top:128px;width:116px;height:54px;background:#535353;border:1px solid #3a3a3a;box-shadow:0 1px 4px rgba(0,0,0,0.35)">
  <div class="a" style="left:0;top:0;width:114px;height:13px;background:#434343;border-bottom:1px solid #3c3c3c"></div>
  <svg style="left:5px;top:4px" width="7" height="7" viewBox="0 0 7 7"><path d="M0.5 0.5 L6.5 6.5 M6.5 0.5 L0.5 6.5" stroke="#c8c8c8" stroke-width="1.2"/></svg>
  <svg style="left:100px;top:4px" width="8" height="6" viewBox="0 0 8 6"><path d="M0.5 0.5 L3 3 L0.5 5.5 M4.5 0.5 L7 3 L4.5 5.5" fill="none" stroke="#a8a8a8" stroke-width="1"/></svg>
  <div class="a" style="left:47px;top:18px;width:19px;height:4px;background:repeating-linear-gradient(90deg,#2c2c2c 0 1px,transparent 1px 2px)"></div>
  <svg style="left:7px;top:25px" width="24" height="24" viewBox="0 0 24 24"><circle cx="10.2" cy="11.6" r="7.2" fill="#c8c8c8"/><path d="M11.5 3.6 A8.2 8.2 0 0 1 11.5 20" fill="none" stroke="#3c3c3c" stroke-width="2.6"/><path d="M11.5 3.6 A8.2 8.2 0 0 1 11.5 20" fill="none" stroke="#d0d0d0" stroke-width="1.3"/><path d="M18.5 9.5 L21 11.8 L18.5 14Z" fill="#d0d0d0"/><rect x="10" y="2" width="3.2" height="3.2" fill="#d8d8d8" stroke="#3c3c3c" stroke-width="0.6"/><rect x="10" y="18.4" width="3.2" height="3.2" fill="#d8d8d8" stroke="#3c3c3c" stroke-width="0.6"/></svg>
  <div class="a" style="left:37px;top:31px;font-size:11px;font-weight:bold;color:#ececec;white-space:nowrap">Image Trace</div>
</div>
<!-- narrow floating panel -->
<div class="a" style="left:88px;top:200px;width:39px;height:316px;background:#535353;border:1px solid #3a3a3a;box-shadow:0 1px 3px rgba(0,0,0,0.3)">
  <div class="a" style="left:0;top:0;width:37px;height:13px;background:#434343;border-bottom:1px solid #3c3c3c"></div>
  <svg style="left:5px;top:3px" width="7" height="7" viewBox="0 0 7 7"><path d="M0.5 0.5 L6.5 6.5 M6.5 0.5 L0.5 6.5" stroke="#c8c8c8" stroke-width="1.2"/></svg>
  <svg style="left:23px;top:4px" width="8" height="6" viewBox="0 0 8 6"><path d="M0.5 0.5 L3 3 L0.5 5.5 M4.5 0.5 L7 3 L4.5 5.5" fill="none" stroke="#a8a8a8" stroke-width="1"/></svg>
  <div class="a" style="left:9px;top:17px;width:19px;height:4px;background:repeating-linear-gradient(90deg,#2c2c2c 0 1px,transparent 1px 2px)"></div>
  <div class="a" style="left:1px;top:108px;width:35px;height:1px;background:#434343"></div>
  <div class="a" style="left:9px;top:114px;width:19px;height:4px;background:repeating-linear-gradient(90deg,#2c2c2c 0 1px,transparent 1px 2px)"></div>
  <div class="a" style="left:4px;top:121px;width:28px;height:21px;background:#3f3f3f;border-radius:2px"></div>
  <div class="a" style="left:1px;top:176px;width:35px;height:1px;background:#434343"></div>
  <div class="a" style="left:9px;top:182px;width:19px;height:4px;background:repeating-linear-gradient(90deg,#2c2c2c 0 1px,transparent 1px 2px)"></div>
  <div class="a" style="left:1px;top:274px;width:35px;height:1px;background:#434343"></div>
  <div class="a" style="left:9px;top:279px;width:19px;height:4px;background:repeating-linear-gradient(90deg,#2c2c2c 0 1px,transparent 1px 2px)"></div>
</div>
<svg style="left:0;top:0" width="1280" height="800" viewBox="0 0 1280 800">
  <g fill="#cfcfcf" stroke="#cfcfcf">
  <!-- A| -->
  <path d="M100 243 L105 229 L107 229 L112 243 L109 243 L108 239 L104 239 L103 243Z M104.7 236.5 H107.3 L106 232.5Z" stroke="none" fill-rule="evenodd"/>
  <path d="M114.5 228 V244" stroke-width="1"/>
  <!-- pilcrow -->
  <path d="M106 258 H113 V272 H111 V260 H109.5 V272 H107.5 V266 C103 266 101 264 101 262 C101 259.5 103 258 106 258Z" stroke="none"/>
  <!-- italic O -->
  <text x="99" y="300" font-family="Liberation Serif" font-style="italic" font-size="21" stroke="none" fill="#bdbdbd">O</text>
  <!-- palette -->
  <path d="M99 338 C97 333 101 326 109 326 C116 326 119 330 118 334 C117 337 113 336 112 338 C111 341 108 342 104 342 C101 342 100 340 99 338Z" stroke="none"/>
  <g fill="#3f3f3f" stroke="none"><circle cx="104" cy="339" r="1.5"/><circle cx="108" cy="340" r="1.5"/><circle cx="105" cy="330" r="1.5"/><circle cx="110" cy="329" r="1.5"/><circle cx="114" cy="332" r="1.5"/><circle cx="102" cy="334" r="1.5"/></g>
  <!-- stroke icon (partially behind tooltip) -->
  <rect x="100.5" y="360" width="14" height="7" fill="none" stroke-width="1.2"/>
  <!-- transform -->
  <rect x="102" y="397" width="11" height="11" fill="none" stroke-width="1" stroke-dasharray="2 1.5"/>
  <g stroke="none"><rect x="100" y="395" width="3" height="3"/><rect x="112" y="395" width="3" height="3"/><rect x="100" y="407" width="3" height="3"/><rect x="112" y="407" width="3" height="3"/><rect x="106" y="395" width="3" height="2.5"/><rect x="106" y="407.5" width="3" height="2.5"/><rect x="100" y="401" width="2.5" height="3"/><rect x="112.5" y="401" width="2.5" height="3"/><circle cx="107.5" cy="402.5" r="0.8"/></g>
  <!-- align -->
  <path d="M101 422 V440" stroke-width="1.2"/>
  <rect x="103" y="423" width="7" height="6" stroke="none" fill="#bfbfbf"/>
  <rect x="103" y="431" width="12" height="6" stroke="none" fill="#bfbfbf"/>
  <!-- pathfinder -->
  <rect x="100" y="452" width="9" height="9" stroke="none" fill="#c8c8c8"/>
  <rect x="104" y="456" width="10" height="10" stroke="none" fill="#c8c8c8"/>
  <rect x="106" y="458" width="3" height="3" stroke="none" fill="#666"/>
  <!-- gradient -->
  <rect x="99" y="493" width="16" height="12" fill="url(#gr3)" stroke-width="1"/>
  </g>
  <defs><linearGradient id="gr3" x1="0" x2="1"><stop offset="0" stop-color="#666"/><stop offset="1" stop-color="#ddd"/></linearGradient></defs>
</svg>
<!-- tooltip -->
<div class="a" style="left:85px;top:347px;width:43px;height:18px;background:#fafafa;border:1px solid #c8c8c8;font-size:12px;color:#111;line-height:16px;padding-left:5px">Color</div>
<!-- vertical scrollbar -->
<div class="a" style="left:1010px;top:87px;width:16px;height:624px;background:#4a4a4a;border-left:1px solid #444"></div>
<svg style="left:1012px;top:91px" width="12" height="8" viewBox="0 0 12 8"><path d="M2 6 L6 2 L10 6" fill="none" stroke="#8c8c8c" stroke-width="1.2"/></svg>
<svg style="left:1012px;top:697px" width="12" height="8" viewBox="0 0 12 8"><path d="M2 2 L6 6 L10 2" fill="none" stroke="#b4b4b4" stroke-width="1.2"/></svg>
<div class="a" style="left:1011px;top:386px;width:14px;height:25px;background:#595959;border-radius:7px"></div>
<!-- status bar -->
<div class="a" style="left:73px;top:711px;width:953px;height:17px;background:#4d4d4d;border-top:1px solid #444;border-bottom:1px solid #3a3a3a"></div>
<div class="a" style="left:78px;top:712px;width:50px;height:15px;background:#434343"></div>
<div class="a" style="left:82px;top:715px;font-size:11px;letter-spacing:-0.6px;color:#ececec">100%</div>
<div class="a" style="left:128px;top:712px;width:17px;height:15px;background:#4f4f4f;border-left:1px solid #474747"></div>
<svg style="left:132px;top:718px" width="9" height="6" viewBox="0 0 9 6"><path d="M1 1 L4.5 4.5 L8 1" fill="none" stroke="#e0e0e0" stroke-width="1.2"/></svg>
<div class="a" style="left:146px;top:712px;width:42px;height:15px;background:#4f4f4f"></div>
<svg style="left:154px;top:714px" width="30" height="11" viewBox="0 0 30 11"><rect x="0" y="1" width="2" height="9" fill="#c8c8c8"/><path d="M9 1 L3 5.5 L9 10Z M24 1 L18 5.5 L24 10Z" fill="#c8c8c8"/></svg>
<div class="a" style="left:188px;top:712px;width:40px;height:15px;background:#434343"></div>
<div class="a" style="left:191px;top:714px;font-size:12px;color:#ececec">2</div>
<div class="a" style="left:228px;top:712px;width:18px;height:15px;background:#4f4f4f;border-left:1px solid #474747"></div>
<svg style="left:232px;top:718px" width="9" height="6" viewBox="0 0 9 6"><path d="M1 1 L4.5 4.5 L8 1" fill="none" stroke="#e0e0e0" stroke-width="1.2"/></svg>
<div class="a" style="left:246px;top:712px;width:40px;height:15px;background:#4f4f4f"></div>
<svg style="left:255px;top:714px" width="30" height="11" viewBox="0 0 30 11"><path d="M1 1 L7 5.5 L1 10Z M15 1 L21 5.5 L15 10Z" fill="#c8c8c8"/><rect x="22" y="1" width="2" height="9" fill="#c8c8c8"/></svg>
<div class="a" style="left:288px;top:712px;width:200px;height:15px;background:#4d4d4d;border-left:1px solid #474747"></div>
<div class="a" style="left:348px;top:715px;font-size:11px;color:#d8d8d8;white-space:nowrap">Toggle Selection</div>
<div class="a" style="left:488px;top:712px;width:18px;height:15px;background:#525252"></div>
<svg style="left:493px;top:714px" width="8" height="11" viewBox="0 0 8 11"><path d="M1 1 L7 5.5 L1 10Z" fill="#c8c8c8"/></svg>
<svg style="left:510px;top:715px" width="8" height="9" viewBox="0 0 8 9"><path d="M6 1 L2 4.5 L6 8" fill="none" stroke="#8a8a8a" stroke-width="1.2"/></svg>
<div class="a" style="left:770px;top:713px;width:26px;height:13px;background:#5c5c5c;border-radius:7px"></div>
<svg style="left:998px;top:715px" width="8" height="9" viewBox="0 0 8 9"><path d="M2 1 L6 4.5 L2 8" fill="none" stroke="#a8a8a8" stroke-width="1.2"/></svg>
<div class="a" style="left:1010px;top:711px;width:16px;height:17px;background:#535353"></div>
<div class="a" style="left:0;top:727px;width:1280px;height:1px;background:#2f2f2f"></div>
<div id="rightp" class="a"></div>
<div class="a" style="left:1026px;top:57px;width:3px;height:671px;background:#3a3a3a;border-right:1px solid #464646"></div>
<div class="a" style="left:1030px;top:57px;width:250px;height:13px;background:#454545;border-bottom:1px solid #3a3a3a"></div>
<svg style="left:1265px;top:61px" width="8" height="6" viewBox="0 0 8 6"><path d="M0.5 0.5 L3 3 L0.5 5.5 M4.5 0.5 L7 3 L4.5 5.5" fill="none" stroke="#b8b8b8" stroke-width="1"/></svg>
<div class="a" style="left:1030px;top:70px;width:250px;height:27px;background:#474747;border-bottom:1px solid #3a3a3a"></div>
<div class="a" style="left:1030px;top:70px;width:53px;height:26px;background:#474747;border-right:1px solid #3e3e3e;overflow:hidden"><div class="a" style="left:8px;top:7px;font-size:11px;letter-spacing:-0.3px;font-weight:bold;color:#c8c8c8;white-space:nowrap">Properties</div></div>
<div class="a" style="left:1083px;top:70px;width:49px;height:27px;background:#535353"><div class="a" style="left:8px;top:7px;font-size:11px;letter-spacing:-0.5px;font-weight:bold;color:#f0f0f0">Layers</div></div>
<div class="a" style="left:1132px;top:70px;width:54px;height:26px;background:#474747;border-right:1px solid #3e3e3e;overflow:hidden"><div class="a" style="left:9px;top:7px;font-size:11px;letter-spacing:-0.3px;font-weight:bold;color:#c8c8c8;white-space:nowrap">Libraries</div></div>
<div class="a" style="left:1187px;top:70px;width:53px;height:26px;background:#474747;border-right:1px solid #3e3e3e;overflow:hidden"><div class="a" style="left:7px;top:7px;font-size:11px;letter-spacing:-0.3px;font-weight:bold;color:#c8c8c8;white-space:nowrap">Swatches</div></div>
<svg style="left:1263px;top:79px" width="11" height="9" viewBox="0 0 11 9"><path d="M0 0.5H11M0 2.8H11M0 5.1H11M0 7.4H11" stroke="#c8c8c8" stroke-width="1"/></svg>
<!-- layers list -->
<div class="a" style="left:1034px;top:103px;width:239px;height:425px;background:#535353;border:1px solid #4a4a4a;overflow:hidden">
<div class="a" style="left:0;top:4px;width:237px;height:1px;background:#626262"></div>
<div class="a" style="left:95px;top:-10px;width:17px;height:13px;background:#fff;border:1.5px solid #000"></div>
<div class="a" style="left:42px;top:0;width:4px;height:4px;background:#6a8ed0"></div>
<div class="a" style="left:0;top:25px;width:225px;height:1px;background:#606060"></div>
<div class="a" style="left:42px;top:6px;width:4px;height:18px;background:#5a86d6"></div>
<svg style="left:3px;top:10px" width="14" height="9" viewBox="0 0 14 9"><path d="M1 4.5 C3 1 5 0.3 7 0.3 C9 0.3 11 1 13 4.5 C11 8 9 8.7 7 8.7 C5 8.7 3 8 1 4.5Z" fill="#d4d4d4"/><circle cx="7" cy="4.5" r="2.3" fill="#535353"/><circle cx="7" cy="4.5" r="1.2" fill="#d4d4d4"/></svg>
<div class="a" style="left:95px;top:6px;width:17px;height:17px;background:#fff;border:1.5px solid #000"><svg style="left:0;top:0" width="13" height="13" viewBox="0 0 13 13"><path d="M3 1 L9 12" stroke="#e3b5cf" stroke-width="2"/></svg></div>
<div class="a" style="left:119px;top:9px;font-size:11px;color:#e6e6e6;white-space:nowrap">&lt;Path&gt;</div>
<div class="a" style="left:196.5px;top:10.5px;width:9px;height:9px;border-radius:50%;border:1.2px solid #d0d0d0"></div>
<div class="a" style="left:0;top:46px;width:225px;height:1px;background:#606060"></div>
<div class="a" style="left:42px;top:27px;width:4px;height:18px;background:#5a86d6"></div>
<svg style="left:3px;top:31px" width="14" height="9" viewBox="0 0 14 9"><path d="M1 4.5 C3 1 5 0.3 7 0.3 C9 0.3 11 1 13 4.5 C11 8 9 8.7 7 8.7 C5 8.7 3 8 1 4.5Z" fill="#d4d4d4"/><circle cx="7" cy="4.5" r="2.3" fill="#535353"/><circle cx="7" cy="4.5" r="1.2" fill="#d4d4d4"/></svg>
<div class="a" style="left:95px;top:27px;width:17px;height:17px;background:#fff;border:1.5px solid #000"><svg style="left:0;top:0" width="13" height="13" viewBox="0 0 13 13"><circle cx="6.5" cy="6.5" r="6" fill="#fff" stroke="#a8286a" stroke-width="0.8"/></svg></div>
<div class="a" style="left:119px;top:30px;font-size:11px;color:#e6e6e6;white-space:nowrap">&lt;Ellip...</div>
<div class="a" style="left:196.5px;top:31.5px;width:9px;height:9px;border-radius:50%;border:1.2px solid #d0d0d0"></div>
<div class="a" style="left:0;top:67px;width:225px;height:1px;background:#606060"></div>
<div class="a" style="left:42px;top:48px;width:4px;height:18px;background:#5a86d6"></div>
<svg style="left:3px;top:52px" width="14" height="9" viewBox="0 0 14 9"><path d="M1 4.5 C3 1 5 0.3 7 0.3 C9 0.3 11 1 13 4.5 C11 8 9 8.7 7 8.7 C5 8.7 3 8 1 4.5Z" fill="#d4d4d4"/><circle cx="7" cy="4.5" r="2.3" fill="#535353"/><circle cx="7" cy="4.5" r="1.2" fill="#d4d4d4"/></svg>
<div class="a" style="left:95px;top:48px;width:17px;height:17px;background:#fff;border:1.5px solid #000"><svg style="left:0;top:0" width="13" height="13" viewBox="0 0 13 13"><circle cx="6.5" cy="6.5" r="6" fill="#fff" stroke="#a8286a" stroke-width="0.8"/></svg></div>
<div class="a" style="left:119px;top:51px;font-size:11px;color:#e6e6e6;white-space:nowrap">&lt;Ellip...</div>
<div class="a" style="left:196.5px;top:52.5px;width:9px;height:9px;border-radius:50%;border:1.2px solid #d0d0d0"></div>
<div class="a" style="left:0;top:88px;width:225px;height:1px;background:#606060"></div>
<div class="a" style="left:42px;top:69px;width:4px;height:18px;background:#5a86d6"></div>
<svg style="left:3px;top:73px" width="14" height="9" viewBox="0 0 14 9"><path d="M1 4.5 C3 1 5 0.3 7 0.3 C9 0.3 11 1 13 4.5 C11 8 9 8.7 7 8.7 C5 8.7 3 8 1 4.5Z" fill="#d4d4d4"/><circle cx="7" cy="4.5" r="2.3" fill="#535353"/><circle cx="7" cy="4.5" r="1.2" fill="#d4d4d4"/></svg>
<div class="a" style="left:95px;top:69px;width:17px;height:17px;background:#fff;border:1.5px solid #000"><svg style="left:0;top:0" width="13" height="13" viewBox="0 0 13 13"><circle cx="6.5" cy="6.5" r="6" fill="#fff" stroke="#a8286a" stroke-width="0.8"/></svg></div>
<div class="a" style="left:119px;top:72px;font-size:11px;color:#e6e6e6;white-space:nowrap">&lt;Ellip...</div>
<div class="a" style="left:196.5px;top:73.5px;width:9px;height:9px;border-radius:50%;border:1.2px solid #d0d0d0"></div>
<div class="a" style="left:0;top:109px;width:225px;height:1px;background:#606060"></div>
<div class="a" style="left:42px;top:90px;width:4px;height:18px;background:#5a86d6"></div>
<svg style="left:3px;top:94px" width="14" height="9" viewBox="0 0 14 9"><path d="M1 4.5 C3 1 5 0.3 7 0.3 C9 0.3 11 1 13 4.5 C11 8 9 8.7 7 8.7 C5 8.7 3 8 1 4.5Z" fill="#d4d4d4"/><circle cx="7" cy="4.5" r="2.3" fill="#535353"/><circle cx="7" cy="4.5" r="1.2" fill="#d4d4d4"/></svg>
<div class="a" style="left:95px;top:90px;width:17px;height:17px;background:#fff;border:1.5px solid #000"><svg style="left:0;top:0" width="13" height="13" viewBox="0 0 13 13"><circle cx="6.5" cy="6.5" r="6" fill="#fff" stroke="#a8286a" stroke-width="0.8"/></svg></div>
<div class="a" style="left:119px;top:93px;font-size:11px;color:#e6e6e6;white-space:nowrap">&lt;Ellip...</div>
<div class="a" style="left:196.5px;top:94.5px;width:9px;height:9px;border-radius:50%;border:1.2px solid #d0d0d0"></div>
<div class="a" style="left:0;top:130px;width:225px;height:1px;background:#606060"></div>
<div class="a" style="left:42px;top:111px;width:4px;height:18px;background:#5a86d6"></div>
<svg style="left:3px;top:115px" width="14" height="9" viewBox="0 0 14 9"><path d="M1 4.5 C3 1 5 0.3 7 0.3 C9 0.3 11 1 13 4.5 C11 8 9 8.7 7 8.7 C5 8.7 3 8 1 4.5Z" fill="#d4d4d4"/><circle cx="7" cy="4.5" r="2.3" fill="#535353"/><circle cx="7" cy="4.5" r="1.2" fill="#d4d4d4"/></svg>
<div class="a" style="left:95px;top:111px;width:17px;height:17px;background:#fff;border:1.5px solid #000"><svg style="left:0;top:0" width="13" height="13" viewBox="0 0 13 13"><circle cx="6.5" cy="6.5" r="6" fill="#fff" stroke="#a8286a" stroke-width="0.8"/></svg></div>
<div class="a" style="left:119px;top:114px;font-size:11px;color:#e6e6e6;white-space:nowrap">&lt;Ellip...</div>
<div class="a" style="left:196.5px;top:115.5px;width:9px;height:9px;border-radius:50%;border:1.2px solid #d0d0d0"></div>
<div class="a" style="left:0;top:151px;width:225px;height:1px;background:#606060"></div>
<div class="a" style="left:42px;top:132px;width:4px;height:18px;background:#5a86d6"></div>
<svg style="left:3px;top:136px" width="14" height="9" viewBox="0 0 14 9"><path d="M1 4.5 C3 1 5 0.3 7 0.3 C9 0.3 11 1 13 4.5 C11 8 9 8.7 7 8.7 C5 8.7 3 8 1 4.5Z" fill="#d4d4d4"/><circle cx="7" cy="4.5" r="2.3" fill="#535353"/><circle cx="7" cy="4.5" r="1.2" fill="#d4d4d4"/></svg>
<div class="a" style="left:95px;top:132px;width:17px;height:17px;background:#fff;border:1.5px solid #000"><svg style="left:0;top:0" width="13" height="13" viewBox="0 0 13 13"><circle cx="6.5" cy="6.5" r="6" fill="#fff" stroke="#a8286a" stroke-width="0.8"/></svg></div>
<div class="a" style="left:119px;top:135px;font-size:11px;color:#e6e6e6;white-space:nowrap">&lt;Ellip...</div>
<div class="a" style="left:196.5px;top:136.5px;width:9px;height:9px;border-radius:50%;border:1.2px solid #d0d0d0"></div>
<div class="a" style="left:0;top:172px;width:225px;height:1px;background:#606060"></div>
<div class="a" style="left:42px;top:153px;width:4px;height:18px;background:#5a86d6"></div>
<svg style="left:3px;top:157px" width="14" height="9" viewBox="0 0 14 9"><path d="M1 4.5 C3 1 5 0.3 7 0.3 C9 0.3 11 1 13 4.5 C11 8 9 8.7 7 8.7 C5 8.7 3 8 1 4.5Z" fill="#d4d4d4"/><circle cx="7" cy="4.5" r="2.3" fill="#535353"/><circle cx="7" cy="4.5" r="1.2" fill="#d4d4d4"/></svg>
<div class="a" style="left:95px;top:153px;width:17px;height:17px;background:#fff;border:1.5px solid #000"><svg style="left:0;top:0" width="13" height="13" viewBox="0 0 13 13"><circle cx="6.5" cy="6.5" r="6" fill="#fff" stroke="#a8286a" stroke-width="0.8"/></svg></div>
<div class="a" style="left:119px;top:156px;font-size:11px;color:#e6e6e6;white-space:nowrap">&lt;Ellip...</div>
<div class="a" style="left:196.5px;top:157.5px;width:9px;height:9px;border-radius:50%;border:1.2px solid #d0d0d0"></div>
<div class="a" style="left:0;top:193px;width:225px;height:1px;background:#606060"></div>
<div class="a" style="left:42px;top:174px;width:4px;height:18px;background:#5a86d6"></div>
<svg style="left:3px;top:178px" width="14" height="9" viewBox="0 0 14 9"><path d="M1 4.5 C3 1 5 0.3 7 0.3 C9 0.3 11 1 13 4.5 C11 8 9 8.7 7 8.7 C5 8.7 3 8 1 4.5Z" fill="#d4d4d4"/><circle cx="7" cy="4.5" r="2.3" fill="#535353"/><circle cx="7" cy="4.5" r="1.2" fill="#d4d4d4"/></svg>
<div class="a" style="left:95px;top:174px;width:17px;height:17px;background:#fff;border:1.5px solid #000"><svg style="left:0;top:0" width="13" height="13" viewBox="0 0 13 13"><circle cx="6.5" cy="6.5" r="6" fill="#fff" stroke="#a8286a" stroke-width="0.8"/></svg></div>
<div class="a" style="left:119px;top:177px;font-size:11px;color:#e6e6e6;white-space:nowrap">&lt;Ellip...</div>
<div class="a" style="left:196.5px;top:178.5px;width:9px;height:9px;border-radius:50%;border:1.2px solid #d0d0d0"></div>
<div class="a" style="left:0;top:214px;width:225px;height:1px;background:#606060"></div>
<div class="a" style="left:42px;top:195px;width:4px;height:18px;background:#5a86d6"></div>
<svg style="left:3px;top:199px" width="14" height="9" viewBox="0 0 14 9"><path d="M1 4.5 C3 1 5 0.3 7 0.3 C9 0.3 11 1 13 4.5 C11 8 9 8.7 7 8.7 C5 8.7 3 8 1 4.5Z" fill="#d4d4d4"/><circle cx="7" cy="4.5" r="2.3" fill="#535353"/><circle cx="7" cy="4.5" r="1.2" fill="#d4d4d4"/></svg>
<div class="a" style="left:95px;top:195px;width:17px;height:17px;background:#fff;border:1.5px solid #000"><svg style="left:0;top:0" width="13" height="13" viewBox="0 0 13 13"><circle cx="6.5" cy="6.5" r="6" fill="#fff" stroke="#a8286a" stroke-width="0.8"/></svg></div>
<div class="a" style="left:119px;top:198px;font-size:11px;color:#e6e6e6;white-space:nowrap">&lt;Ellip...</div>
<div class="a" style="left:196.5px;top:199.5px;width:9px;height:9px;border-radius:50%;border:1.2px solid #d0d0d0"></div>
<div class="a" style="left:0;top:235px;width:225px;height:1px;background:#606060"></div>
<div class="a" style="left:42px;top:216px;width:4px;height:18px;background:#5a86d6"></div>
<svg style="left:3px;top:220px" width="14" height="9" viewBox="0 0 14 9"><path d="M1 4.5 C3 1 5 0.3 7 0.3 C9 0.3 11 1 13 4.5 C11 8 9 8.7 7 8.7 C5 8.7 3 8 1 4.5Z" fill="#d4d4d4"/><circle cx="7" cy="4.5" r="2.3" fill="#535353"/><circle cx="7" cy="4.5" r="1.2" fill="#d4d4d4"/></svg>
<div class="a" style="left:95px;top:216px;width:17px;height:17px;background:#fff;border:1.5px solid #000"><svg style="left:0;top:0" width="13" height="13" viewBox="0 0 13 13"><circle cx="6.5" cy="6.5" r="6" fill="#fff" stroke="#a8286a" stroke-width="0.8"/></svg></div>
<div class="a" style="left:119px;top:219px;font-size:11px;color:#e6e6e6;white-space:nowrap">&lt;Ellip...</div>
<div class="a" style="left:196.5px;top:220.5px;width:9px;height:9px;border-radius:50%;border:1.2px solid #d0d0d0"></div>
<div class="a" style="left:0;top:256px;width:225px;height:1px;background:#606060"></div>
<div class="a" style="left:42px;top:237px;width:4px;height:18px;background:#5a86d6"></div>
<svg style="left:3px;top:241px" width="14" height="9" viewBox="0 0 14 9"><path d="M1 4.5 C3 1 5 0.3 7 0.3 C9 0.3 11 1 13 4.5 C11 8 9 8.7 7 8.7 C5 8.7 3 8 1 4.5Z" fill="#d4d4d4"/><circle cx="7" cy="4.5" r="2.3" fill="#535353"/><circle cx="7" cy="4.5" r="1.2" fill="#d4d4d4"/></svg>
<div class="a" style="left:95px;top:237px;width:17px;height:17px;background:#fff;border:1.5px solid #000"><svg style="left:0;top:0" width="13" height="13" viewBox="0 0 13 13"><circle cx="6.5" cy="6.5" r="6" fill="#fff" stroke="#a8286a" stroke-width="0.8"/></svg></div>
<div class="a" style="left:119px;top:240px;font-size:11px;color:#e6e6e6;white-space:nowrap">&lt;Ellip...</div>
<div class="a" style="left:196.5px;top:241.5px;width:9px;height:9px;border-radius:50%;border:1.2px solid #d0d0d0"></div>
<div class="a" style="left:0;top:277px;width:225px;height:1px;background:#606060"></div>
<div class="a" style="left:42px;top:258px;width:4px;height:18px;background:#5a86d6"></div>
<svg style="left:3px;top:262px" width="14" height="9" viewBox="0 0 14 9"><path d="M1 4.5 C3 1 5 0.3 7 0.3 C9 0.3 11 1 13 4.5 C11 8 9 8.7 7 8.7 C5 8.7 3 8 1 4.5Z" fill="#d4d4d4"/><circle cx="7" cy="4.5" r="2.3" fill="#535353"/><circle cx="7" cy="4.5" r="1.2" fill="#d4d4d4"/></svg>
<div class="a" style="left:95px;top:258px;width:17px;height:17px;background:#fff;border:1.5px solid #000"><svg style="left:0;top:0" width="13" height="13" viewBox="0 0 13 13"><circle cx="6.5" cy="6.5" r="6" fill="#fff" stroke="#a8286a" stroke-width="0.8"/></svg></div>
<div class="a" style="left:119px;top:261px;font-size:11px;color:#e6e6e6;white-space:nowrap">&lt;Ellip...</div>
<div class="a" style="left:196.5px;top:262.5px;width:9px;height:9px;border-radius:50%;border:1.2px solid #d0d0d0"></div>
<div class="a" style="left:0;top:298px;width:225px;height:1px;background:#606060"></div>
<div class="a" style="left:42px;top:279px;width:4px;height:18px;background:#5a86d6"></div>
<svg style="left:3px;top:283px" width="14" height="9" viewBox="0 0 14 9"><path d="M1 4.5 C3 1 5 0.3 7 0.3 C9 0.3 11 1 13 4.5 C11 8 9 8.7 7 8.7 C5 8.7 3 8 1 4.5Z" fill="#d4d4d4"/><circle cx="7" cy="4.5" r="2.3" fill="#535353"/><circle cx="7" cy="4.5" r="1.2" fill="#d4d4d4"/></svg>
<div class="a" style="left:95px;top:279px;width:17px;height:17px;background:#fff;border:1.5px solid #000"><svg style="left:0;top:0" width="13" height="13" viewBox="0 0 13 13"><circle cx="6.5" cy="6.5" r="6" fill="#fff" stroke="#a8286a" stroke-width="0.8"/></svg></div>
<div class="a" style="left:119px;top:282px;font-size:11px;color:#e6e6e6;white-space:nowrap">&lt;Ellip...</div>
<div class="a" style="left:196.5px;top:283.5px;width:9px;height:9px;border-radius:50%;border:1.2px solid #d0d0d0"></div>
<div class="a" style="left:0;top:319px;width:225px;height:1px;background:#606060"></div>
<div class="a" style="left:42px;top:300px;width:4px;height:18px;background:#5a86d6"></div>
<svg style="left:3px;top:304px" width="14" height="9" viewBox="0 0 14 9"><path d="M1 4.5 C3 1 5 0.3 7 0.3 C9 0.3 11 1 13 4.5 C11 8 9 8.7 7 8.7 C5 8.7 3 8 1 4.5Z" fill="#d4d4d4"/><circle cx="7" cy="4.5" r="2.3" fill="#535353"/><circle cx="7" cy="4.5" r="1.2" fill="#d4d4d4"/></svg>
<div class="a" style="left:95px;top:300px;width:17px;height:17px;background:#fff;border:1.5px solid #000"><svg style="left:0;top:0" width="13" height="13" viewBox="0 0 13 13"><circle cx="6.5" cy="6.5" r="6" fill="#fff" stroke="#a8286a" stroke-width="0.8"/></svg></div>
<div class="a" style="left:119px;top:303px;font-size:11px;color:#e6e6e6;white-space:nowrap">&lt;Ellip...</div>
<div class="a" style="left:196.5px;top:304.5px;width:9px;height:9px;border-radius:50%;border:1.2px solid #d0d0d0"></div>
<div class="a" style="left:0;top:340px;width:225px;height:1px;background:#606060"></div>
<div class="a" style="left:42px;top:321px;width:4px;height:18px;background:#5a86d6"></div>
<svg style="left:3px;top:325px" width="14" height="9" viewBox="0 0 14 9"><path d="M1 4.5 C3 1 5 0.3 7 0.3 C9 0.3 11 1 13 4.5 C11 8 9 8.7 7 8.7 C5 8.7 3 8 1 4.5Z" fill="#d4d4d4"/><circle cx="7" cy="4.5" r="2.3" fill="#535353"/><circle cx="7" cy="4.5" r="1.2" fill="#d4d4d4"/></svg>
<div class="a" style="left:95px;top:321px;width:17px;height:17px;background:#fff;border:1.5px solid #000"><svg style="left:0;top:0" width="13" height="13" viewBox="0 0 13 13"><circle cx="6.5" cy="6.5" r="6" fill="#fff" stroke="#a8286a" stroke-width="0.8"/></svg></div>
<div class="a" style="left:119px;top:324px;font-size:11px;color:#e6e6e6;white-space:nowrap">&lt;Ellip...</div>
<div class="a" style="left:196.5px;top:325.5px;width:9px;height:9px;border-radius:50%;border:1.2px solid #d0d0d0"></div>
<div class="a" style="left:0;top:361px;width:225px;height:1px;background:#606060"></div>
<div class="a" style="left:42px;top:342px;width:4px;height:18px;background:#5a86d6"></div>
<div class="a" style="left:95px;top:342px;width:17px;height:17px;background:#cdc9bd;border:1.5px solid #000"><svg style="left:0;top:0" width="13" height="13" viewBox="0 0 13 13"><path d="M3 8 L10 5" stroke="#8a8a7a" stroke-width="0.8"/></svg></div>
<div class="a" style="left:119px;top:345px;font-size:11px;color:#e6e6e6;white-space:nowrap">&lt;Ima...</div>
<div class="a" style="left:196.5px;top:346.5px;width:9px;height:9px;border-radius:50%;border:1.2px solid #d0d0d0"></div>
<div class="a" style="left:0;top:382px;width:225px;height:1px;background:#606060"></div>
<div class="a" style="left:42px;top:363px;width:4px;height:18px;background:#5a86d6"></div>
<div class="a" style="left:95px;top:363px;width:17px;height:17px;background:#cdc9bd;border:1.5px solid #000"><svg style="left:0;top:0" width="13" height="13" viewBox="0 0 13 13"><path d="M3 8 L10 5" stroke="#8a8a7a" stroke-width="0.8"/></svg></div>
<div class="a" style="left:119px;top:366px;font-size:11px;color:#e6e6e6;white-space:nowrap">&lt;Ima...</div>
<div class="a" style="left:196.5px;top:367.5px;width:9px;height:9px;border-radius:50%;border:1.2px solid #d0d0d0"></div>
<div class="a" style="left:0;top:403px;width:225px;height:1px;background:#606060"></div>
<div class="a" style="left:42px;top:384px;width:4px;height:18px;background:#5a86d6"></div>
<svg style="left:3px;top:388px" width="14" height="9" viewBox="0 0 14 9"><path d="M1 4.5 C3 1 5 0.3 7 0.3 C9 0.3 11 1 13 4.5 C11 8 9 8.7 7 8.7 C5 8.7 3 8 1 4.5Z" fill="#d4d4d4"/><circle cx="7" cy="4.5" r="2.3" fill="#535353"/><circle cx="7" cy="4.5" r="1.2" fill="#d4d4d4"/></svg>
<div class="a" style="left:95px;top:384px;width:17px;height:17px;background:#fff;border:1.5px solid #000"></div>
<div class="a" style="left:119px;top:387px;font-size:11px;color:#e6e6e6;white-space:nowrap">&lt;Rect...</div>
<div class="a" style="left:196.5px;top:388.5px;width:9px;height:9px;border-radius:50%;border:1.2px solid #d0d0d0"></div>
<div class="a" style="left:0;top:424px;width:225px;height:1px;background:#606060"></div>
<div class="a" style="left:42px;top:405px;width:4px;height:18px;background:#5a86d6"></div>
<svg style="left:3px;top:409px" width="14" height="9" viewBox="0 0 14 9"><path d="M1 4.5 C3 1 5 0.3 7 0.3 C9 0.3 11 1 13 4.5 C11 8 9 8.7 7 8.7 C5 8.7 3 8 1 4.5Z" fill="#d4d4d4"/><circle cx="7" cy="4.5" r="2.3" fill="#535353"/><circle cx="7" cy="4.5" r="1.2" fill="#d4d4d4"/></svg>
<svg style="left:27px;top:409px" width="9" height="11" viewBox="0 0 9 11"><path d="M2 5 V3.3 a2.5 2.5 0 0 1 5 0 V5" fill="none" stroke="#cfcfcf" stroke-width="1.3"/><rect x="0.5" y="5" width="8" height="6" fill="#cfcfcf"/></svg>
<div class="a" style="left:95px;top:405px;width:17px;height:17px;background:#fff;border:1.5px solid #000"></div>
<div class="a" style="left:119px;top:408px;font-size:11px;color:#e6e6e6;white-space:nowrap">&lt;Rect...</div>
<div class="a" style="left:196.5px;top:409.5px;width:9px;height:9px;border-radius:50%;border:1.2px solid #d0d0d0"></div>
<div class="a" style="left:20px;top:0;width:1px;height:425px;background:#5e5e5e"></div>
<div class="a" style="left:190px;top:0;width:1px;height:425px;background:#5e5e5e"></div>
<div class="a" style="left:225px;top:0;width:13px;height:423px;background:#4d4d4d"></div>
<svg style="left:227px;top:3px" width="10" height="6" viewBox="0 0 10 6"><path d="M1 5 L5 1 L9 5" fill="none" stroke="#909090" stroke-width="1.1"/></svg>
<div class="a" style="left:227px;top:368px;width:10px;height:42px;background:#5c5c5c;border-radius:5px"></div>
<svg style="left:227px;top:413px" width="10" height="6" viewBox="0 0 10 6"><path d="M1 1 L5 5 L9 1" fill="none" stroke="#909090" stroke-width="1.1"/></svg>
</div>
<div class="a" style="left:1035px;top:533px;font-size:11px;letter-spacing:-0.3px;color:#e0e0e0">1 Layer</div>
<svg style="left:0;top:0" width="1280" height="800" viewBox="0 0 1280 800">
 <path d="M1115.5 534.8 H1110.3 V543.6 H1119.8 V538.5" fill="none" stroke="#d6d6d6" stroke-width="1.2"/>
 <path d="M1114.8 539.5 L1120.6 533.5" stroke="#d6d6d6" stroke-width="1.2"/>
 <path d="M1121.6 532.3 L1116.8 532.8 L1121.1 537.1Z" fill="#d6d6d6"/>
 <circle cx="1143.2" cy="536.6" r="3.6" fill="none" stroke="#6a6a6a" stroke-width="1.5"/>
 <path d="M1140.6 539.4 L1137.2 542.8" stroke="#6a6a6a" stroke-width="2" stroke-linecap="round"/>
 <rect x="1162.2" y="533.2" width="7.6" height="7.6" fill="none" stroke="#d6d6d6" stroke-width="1.1"/>
 <rect x="1165.2" y="536.2" width="7.6" height="7.2" fill="none" stroke="#d6d6d6" stroke-width="1.1"/>
 <rect x="1165.8" y="536.8" width="3.6" height="3.6" fill="#9a9a9a"/>
 <path d="M1186.4 532.8 V539.2 H1190" fill="none" stroke="#d6d6d6" stroke-width="1.2"/>
 <path d="M1191.6 539.2 L1189 536.8 V541.6Z" fill="#d6d6d6"/>
 <path d="M1192.4 534 H1200.4 V543.2 H1195.8 L1192.4 539.8Z" fill="#d6d6d6"/>
 <path d="M1215 533 H1225 V543.2 H1218.6 L1215 539.6Z" fill="#d6d6d6"/>
 <path d="M1214.4 539.2 L1218.8 539.2 L1218.8 543.6Z" fill="#535353"/>
 <path d="M1240 534.6 H1251 M1243.2 534.4 V532.4 H1247.8 V534.4 M1241.2 535.6 V543.4 H1249.8 V535.6 M1244 537 V542 M1247 537 V542" fill="none" stroke="#6a6a6a" stroke-width="1.1"/>
</svg>
<div class="a" style="left:1030px;top:548px;width:250px;height:3px;background:#3a3a3a"></div>
<div class="a" style="left:1030px;top:551px;width:250px;height:27px;background:#474747;border-bottom:1px solid #3a3a3a"></div>
<div class="a" style="left:1030px;top:551px;width:67px;height:27px;background:#535353"><div class="a" style="left:8px;top:6px;font-size:11px;letter-spacing:-0.15px;font-weight:bold;color:#f0f0f0">Artboards</div></div>
<div class="a" style="left:1097px;top:551px;width:84px;height:26px;background:#474747;border-left:1px solid #3e3e3e;border-right:1px solid #3e3e3e"><div class="a" style="left:8px;top:6px;font-size:11px;letter-spacing:-0.25px;font-weight:bold;color:#c8c8c8;white-space:nowrap">Asset Export</div></div>
<svg style="left:1263px;top:560px" width="11" height="9" viewBox="0 0 11 9"><path d="M0 0.5H11M0 2.8H11M0 5.1H11M0 7.4H11" stroke="#c8c8c8" stroke-width="1"/></svg>
<div class="a" style="left:1034px;top:584px;width:239px;height:123px;background:#535353;border:1px solid #4a4a4a;overflow:hidden">
<div class="a" style="left:41px;top:0;width:1px;height:123px;background:#5e5e5e"></div>
<div class="a" style="left:185px;top:0;width:1px;height:123px;background:#5e5e5e"></div>
<div class="a" style="left:0;top:18px;width:227px;height:1px;background:#5e5e5e"></div>
<div class="a" style="left:5px;top:2px;font-size:13px;color:#f0f0f0">1</div>
<div class="a" style="left:46px;top:3px;font-size:11px;color:#e0e0e0;white-space:nowrap">Artboard 1</div>
<svg style="left:193px;top:1px" width="16" height="13" viewBox="0 0 16 13"><path d="M4 3 H11 L14 6 V12 H4Z" fill="#5a5a5a" stroke="#d0d0d0" stroke-width="1.1"/><path d="M11 3 V6 H14" fill="#7a7a7a" stroke="#d0d0d0" stroke-width="0.8"/><path d="M0 0.5 H2 M2.5 0 V2" stroke="#d0d0d0" stroke-width="1"/></svg>
<div class="a" style="left:0;top:19px;width:227px;height:19px;background:#41678d"></div>
<div class="a" style="left:0;top:37px;width:227px;height:1px;background:#5e5e5e"></div>
<div class="a" style="left:5px;top:21px;font-size:13px;color:#f0f0f0">2</div>
<div class="a" style="left:46px;top:22px;font-size:11px;color:#eef2f6;white-space:nowrap">Artboard 1 copy</div>
<svg style="left:193px;top:20px" width="16" height="13" viewBox="0 0 16 13"><path d="M4 3 H11 L14 6 V12 H4Z" fill="#5a5a5a" stroke="#dfe8f0" stroke-width="1.1"/><path d="M11 3 V6 H14" fill="#7a7a7a" stroke="#dfe8f0" stroke-width="0.8"/><path d="M0 0.5 H2 M2.5 0 V2" stroke="#dfe8f0" stroke-width="1"/></svg>
<div class="a" style="left:0;top:56px;width:227px;height:1px;background:#5e5e5e"></div>
<div class="a" style="left:5px;top:40px;font-size:13px;color:#f0f0f0">3</div>
<div class="a" style="left:46px;top:41px;font-size:11px;color:#e0e0e0;white-space:nowrap">Artboard 3</div>
<svg style="left:193px;top:39px" width="16" height="13" viewBox="0 0 16 13"><path d="M4 3 H11 L14 6 V12 H4Z" fill="#5a5a5a" stroke="#d0d0d0" stroke-width="1.1"/><path d="M11 3 V6 H14" fill="#7a7a7a" stroke="#d0d0d0" stroke-width="0.8"/><path d="M0 0.5 H2 M2.5 0 V2" stroke="#d0d0d0" stroke-width="1"/></svg>
<div class="a" style="left:0;top:75px;width:227px;height:1px;background:#5e5e5e"></div>
<div class="a" style="left:5px;top:59px;font-size:13px;color:#f0f0f0">4</div>
<div class="a" style="left:46px;top:60px;font-size:11px;color:#e0e0e0;white-space:nowrap">Artboard 4</div>
<svg style="left:193px;top:58px" width="16" height="13" viewBox="0 0 16 13"><path d="M4 3 H11 L14 6 V12 H4Z" fill="#5a5a5a" stroke="#d0d0d0" stroke-width="1.1"/><path d="M11 3 V6 H14" fill="#7a7a7a" stroke="#d0d0d0" stroke-width="0.8"/><path d="M0 0.5 H2 M2.5 0 V2" stroke="#d0d0d0" stroke-width="1"/></svg>
<div class="a" style="left:0;top:94px;width:227px;height:1px;background:#5e5e5e"></div>
<div class="a" style="left:5px;top:78px;font-size:13px;color:#f0f0f0">5</div>
<div class="a" style="left:46px;top:79px;font-size:11px;color:#e0e0e0;white-space:nowrap">Artboard 5</div>
<svg style="left:193px;top:77px" width="16" height="13" viewBox="0 0 16 13"><path d="M4 3 H11 L14 6 V12 H4Z" fill="#5a5a5a" stroke="#d0d0d0" stroke-width="1.1"/><path d="M11 3 V6 H14" fill="#7a7a7a" stroke="#d0d0d0" stroke-width="0.8"/><path d="M0 0.5 H2 M2.5 0 V2" stroke="#d0d0d0" stroke-width="1"/></svg>
<div class="a" style="left:0;top:113px;width:227px;height:1px;background:#5e5e5e"></div>
<div class="a" style="left:5px;top:97px;font-size:13px;color:#f0f0f0">6</div>
<div class="a" style="left:46px;top:98px;font-size:11px;color:#e0e0e0;white-space:nowrap">Artboard 6</div>
<svg style="left:193px;top:96px" width="16" height="13" viewBox="0 0 16 13"><path d="M4 3 H11 L14 6 V12 H4Z" fill="#5a5a5a" stroke="#d0d0d0" stroke-width="1.1"/><path d="M11 3 V6 H14" fill="#7a7a7a" stroke="#d0d0d0" stroke-width="0.8"/><path d="M0 0.5 H2 M2.5 0 V2" stroke="#d0d0d0" stroke-width="1"/></svg>
<div class="a" style="left:0;top:132px;width:227px;height:1px;background:#5e5e5e"></div>
<div class="a" style="left:5px;top:116px;font-size:13px;color:#f0f0f0">7</div>
<div class="a" style="left:46px;top:117px;font-size:11px;color:#e0e0e0;white-space:nowrap">Artboard 6 copy</div>
<svg style="left:193px;top:115px" width="16" height="13" viewBox="0 0 16 13"><path d="M4 3 H11 L14 6 V12 H4Z" fill="#5a5a5a" stroke="#d0d0d0" stroke-width="1.1"/><path d="M11 3 V6 H14" fill="#7a7a7a" stroke="#d0d0d0" stroke-width="0.8"/><path d="M0 0.5 H2 M2.5 0 V2" stroke="#d0d0d0" stroke-width="1"/></svg>
<div class="a" style="left:227px;top:0;width:11px;height:121px;background:#4d4d4d"></div>
<svg style="left:228px;top:3px" width="10" height="6" viewBox="0 0 10 6"><path d="M1 5 L5 1 L9 5" fill="none" stroke="#909090" stroke-width="1.1"/></svg>
<div class="a" style="left:228px;top:13px;width:9px;height:45px;background:#5c5c5c;border-radius:4px"></div>
<svg style="left:228px;top:111px" width="10" height="6" viewBox="0 0 10 6"><path d="M1 1 L5 5 L9 1" fill="none" stroke="#909090" stroke-width="1.1"/></svg>
</div>
<svg style="left:0;top:0" width="1280" height="800" viewBox="0 0 1280 800">
 <g fill="#d6d6d6">
  <path d="M1041 712.5 H1052 L1043 720.5" fill="none" stroke="#d6d6d6" stroke-width="2"/>
  <path d="M1041 721.5 H1052" fill="none" stroke="#d6d6d6" stroke-width="2"/>
  <path d="M1051.5 717.8 L1056 721.5 L1051.5 725.2Z"/>
  <rect x="1040" y="710.5" width="3" height="4"/><rect x="1040" y="719.5" width="3" height="4"/>
  <path d="M1167.5 711 L1173.5 717 H1170.5 V724 H1164.5 V717 H1161.5Z"/>
  <path d="M1193.5 724 L1199.5 718 H1196.5 V711 H1190.5 V718 H1187.5Z"/>
  <path d="M1216 712 H1226 V722 H1219.5 L1216 718.5Z"/><path d="M1213.5 718 L1219 718 L1219 723.5Z" fill="#535353"/>
 </g>
 <path d="M1240 713.5 H1251 M1243.5 713 V711.5 H1247.5 V713 M1241.5 714 V723.5 H1249.5 V714 M1244.5 716 V722 M1246.5 716 V722" fill="none" stroke="#d6d6d6" stroke-width="1.1"/>
</svg><!-- below window (other window) -->
<div class="a" style="left:0;top:728px;width:1280px;height:28px;background:linear-gradient(90deg,rgba(255,255,255,0.25) 0,rgba(255,255,255,0.12) 35px,rgba(0,0,0,0) 40px,rgba(0,0,0,0) 320px,rgba(0,0,0,0.06) 322px,rgba(0,0,0,0.06) 340px,rgba(0,0,0,0) 342px,rgba(0,0,0,0) 100%),linear-gradient(#9a9a9a,#b0b0b0 50%,#c8c8c8);border-radius:0 0 5px 5px;border-bottom:1px solid #d8d8d8"></div>
<div class="a" style="left:0;top:756px;width:1280px;height:44px;background:radial-gradient(ellipse 30px 14px at 25px 12px,#342828,rgba(0,0,0,0)),radial-gradient(ellipse 35px 16px at 30px 36px,#2e2222,rgba(0,0,0,0)),radial-gradient(ellipse 40px 12px at 120px 14px,#322626,rgba(0,0,0,0)),radial-gradient(ellipse 30px 14px at 175px 34px,#2e2424,rgba(0,0,0,0)),radial-gradient(ellipse 25px 10px at 80px 30px,#2a2020,rgba(0,0,0,0)),linear-gradient(90deg,#1c1616 0,#211a1a 150px,#2a2020 210px)"></div>
<!-- wallpaper right -->
<div class="a" style="left:1070px;top:756px;width:210px;height:44px;overflow:hidden;background:linear-gradient(90deg,#2a2226 0,#3a3a48 40%,#5a6a88 60%,#6a7898 75%,#3a4050 88%,#56607a 100%)">
  <div class="a" style="left:-10px;top:10px;width:120px;height:44px;border-radius:50%;background:radial-gradient(closest-side,rgba(200,90,50,0.95),rgba(150,60,35,0.7) 50%,rgba(120,50,30,0))"></div>
  <div class="a" style="left:40px;top:26px;width:40px;height:20px;border-radius:50%;background:radial-gradient(closest-side,rgba(240,130,70,0.9),rgba(200,90,50,0))"></div>
  <div class="a" style="left:0;top:0;width:210px;height:12px;background:linear-gradient(rgba(18,18,26,0.9),rgba(18,18,26,0))"></div>
  <div class="a" style="left:10px;top:14px;width:30px;height:14px;border-radius:50%;background:radial-gradient(closest-side,rgba(25,20,25,0.8),rgba(25,20,25,0))"></div>
  <div class="a" style="left:70px;top:4px;width:30px;height:20px;border-radius:50%;background:radial-gradient(closest-side,rgba(20,20,30,0.9),rgba(20,20,30,0))"></div>
  <div class="a" style="left:120px;top:22px;width:26px;height:24px;border-radius:50%;background:radial-gradient(closest-side,rgba(30,30,40,0.7),rgba(30,30,40,0))"></div>
  <div class="a" style="left:160px;top:4px;width:16px;height:30px;border-radius:50%;background:radial-gradient(closest-side,rgba(25,28,38,0.8),rgba(25,28,38,0))"></div>
</div>
<!-- dock -->
<div class="a" style="left:209px;top:756px;width:861px;height:44px;background:linear-gradient(90deg,#675f62 0,#6a6266 45%,#6d6d7c 70%,#7a6a78 80%,#c27a6c 90%,#d98068 100%);border-radius:4px 4px 0 0"></div>
<div class="a" style="left:955px;top:766px;width:1px;height:28px;background:#6a4a44"></div>
<svg style="left:0;top:0" width="1280" height="800" viewBox="0 0 1280 800">
 <defs>
  <linearGradient id="lp" x1="0" y1="0" x2="0" y2="1"><stop offset="0" stop-color="#c8c8c8"/><stop offset="1" stop-color="#8a8a8a"/></linearGradient>
  <linearGradient id="sf" x1="0" y1="0" x2="0" y2="1"><stop offset="0" stop-color="#48a8f0"/><stop offset="1" stop-color="#1a6ad8"/></linearGradient>
  <radialGradient id="ph"><stop offset="0" stop-color="#fff"/><stop offset="1" stop-color="#f0f0f0"/></radialGradient>
 </defs>
 <!-- Finder -->
 <rect x="215" y="763" width="28" height="27" rx="2" fill="#f0f4f8"/>
 <path d="M215 763 H231 C228 770 227 778 229 790 H215Z" fill="#2a9af0"/>
 <path d="M222 771 V774 M236 771 V774" stroke="#1a2a40" stroke-width="1.6"/>
 <path d="M220 779 Q229 786 238 779" fill="none" stroke="#1a2a40" stroke-width="1.2"/>
 <circle cx="229" cy="795" r="1.5" fill="#111"/>
 <!-- Launchpad -->
 <circle cx="264.5" cy="776" r="14" fill="url(#lp)" stroke="#a0a0a0" stroke-width="0.5"/>
 <g transform="rotate(-45 265 775)"><ellipse cx="266" cy="775" rx="9" ry="3.6" fill="#3c3c3c"/><path d="M258 775 L255 771 L260 772.5Z M258 775 L255 779 L260 777.5Z" fill="#3c3c3c"/><circle cx="269" cy="775" r="1.2" fill="#b8b8b8"/></g>
 <path d="M257 783 L259.5 779 L261 780.5Z" fill="#555"/>
 <!-- Safari -->
 <circle cx="299.5" cy="776" r="14" fill="#f4f4f4"/>
 <circle cx="299.5" cy="776" r="12.6" fill="url(#sf)"/>
 <g stroke="#d8ecfa" stroke-width="0.5" opacity="0.8"><path d="M299.5 764.5 V767 M299.5 785 V787.5 M288 776 H290.5 M308.5 776 H311"/></g>
 <path d="M299.5 776 L307.5 767.5 L301.8 778.3Z M299.5 776 L307.5 767.5 L297.2 773.7Z" fill="#f03a30"/>
 <path d="M299.5 776 L291.5 784.5 L297.2 773.7Z M299.5 776 L291.5 784.5 L301.8 778.3Z" fill="#f6f6f6"/>
 <!-- Mail -->
 <g transform="rotate(-8 334 776)"><rect x="322" y="764" width="24" height="25" fill="#f8f8f8" stroke="#c0c8d0" stroke-width="0.5"/><rect x="324" y="766" width="20" height="21" fill="#5a8ac8"/><path d="M327 772 C331 770 336 774 338 779 L341 783 L336 781 C331 780 328 777 327 772Z" fill="#e8e0d0"/><path d="M332 774 L340 770" stroke="#704020" stroke-width="2"/></g>
 <!-- Contacts -->
 <rect x="357" y="763" width="24" height="27" rx="2" fill="#a87a48"/>
 <rect x="381" y="767" width="2" height="6" fill="#5aa050"/><rect x="381" y="774" width="2" height="6" fill="#50a0c0"/><rect x="381" y="781" width="2" height="5" fill="#c0a040"/>
 <circle cx="369" cy="773" r="3.5" fill="#8a5e30"/><path d="M362 783 C363 778 375 778 376 783Z" fill="#8a5e30"/>
 <!-- Calendar -->
 <rect x="391" y="763" width="26" height="26" rx="1" fill="#fafafa"/>
 <path d="M391 763 H417 V770 H391Z" fill="#e03a3a"/>
 <text x="404" y="769" text-anchor="middle" font-size="5" fill="#fff" font-family="Liberation Sans">MAR</text>
 <text x="404" y="786" text-anchor="middle" font-size="14" fill="#222" font-family="Liberation Sans">10</text>
 <!-- Notes -->
 <g transform="rotate(-3 440 776)"><rect x="427" y="763" width="25" height="27" fill="#fbf6d0"/><rect x="427" y="763" width="25" height="5" fill="#f0c838"/><path d="M429 773H450M429 777H450M429 781H450M429 785H450" stroke="#ddd6a8" stroke-width="0.6"/></g>
 <!-- Reminders -->
 <rect x="462" y="763" width="26" height="27" rx="1.5" fill="#fafafa"/>
 <circle cx="467" cy="769" r="1.8" fill="#f08030"/><circle cx="467" cy="775" r="1.8" fill="#30a0e0"/><circle cx="467" cy="781" r="1.8" fill="#60c060"/><circle cx="467" cy="786" r="1.8" fill="#a070d0"/>
 <path d="M471 769H486M471 775H486M471 781H486M471 786H486" stroke="#ccc" stroke-width="0.7"/>
 <!-- Preview-like (Photo Booth / Maps) -->
 <g transform="rotate(-6 508 776)"><rect x="496" y="764" width="25" height="24" fill="#f0ead8" stroke="#c8c0a8" stroke-width="0.5"/><rect x="498" y="767" width="21" height="4" fill="#70b050"/><rect x="499" y="772" width="16" height="12" fill="#b8d8e8"/></g>
 <circle cx="517" cy="784" r="6" fill="#eee" stroke="#aaa" stroke-width="0.7"/><circle cx="517" cy="784" r="3" fill="none" stroke="#888" stroke-width="0.6"/>
 <!-- Photos -->
 <circle cx="544.5" cy="776" r="14" fill="#f6f6f6"/>
 <g transform="translate(544.5 776)">
  <ellipse cx="0" cy="-6" rx="3.5" ry="6" fill="#f5a623" opacity="0.9"/>
  <ellipse cx="0" cy="-6" rx="3.5" ry="6" fill="#f5d020" transform="rotate(45)" opacity="0.85"/>
  <ellipse cx="0" cy="-6" rx="3.5" ry="6" fill="#8acd50" transform="rotate(90)" opacity="0.85"/>
  <ellipse cx="0" cy="-6" rx="3.5" ry="6" fill="#40b0a0" transform="rotate(135)" opacity="0.85"/>
  <ellipse cx="0" cy="-6" rx="3.5" ry="6" fill="#4a90e2" transform="rotate(180)" opacity="0.85"/>
  <ellipse cx="0" cy="-6" rx="3.5" ry="6" fill="#9a70d0" transform="rotate(225)" opacity="0.85"/>
  <ellipse cx="0" cy="-6" rx="3.5" ry="6" fill="#e04a8a" transform="rotate(270)" opacity="0.85"/>
  <ellipse cx="0" cy="-6" rx="3.5" ry="6" fill="#f05a3a" transform="rotate(315)" opacity="0.85"/>
 </g>
 <!-- Messages -->
 <ellipse cx="578" cy="774" rx="14" ry="12" fill="#3a9af0"/>
 <path d="M566 782 L563 789 L572 784Z" fill="#3a9af0"/>
 <ellipse cx="585" cy="781" rx="9" ry="7" fill="#f4f6f8"/>
 <circle cx="581" cy="781" r="1.1" fill="#333"/><circle cx="585" cy="781" r="1.1" fill="#333"/><circle cx="589" cy="781" r="1.1" fill="#333"/>
 <!-- FaceTime -->
 <rect x="600" y="763" width="27" height="27" rx="3" fill="#2ec050"/>
 <rect x="605" y="771" width="13" height="9" rx="1" fill="#d8f5d8"/>
 <circle cx="622" cy="783" r="7" fill="#dff5dc" stroke="#2ec050" stroke-width="1"/>
 <path d="M619 780 C620 785 622 787 625 787" stroke="#2ea040" stroke-width="1.8" fill="none"/>
 <circle cx="625" cy="766" r="5.5" fill="#e83a30"/>
 <text x="625" y="768.5" text-anchor="middle" font-size="7" fill="#fff" font-family="Liberation Sans" font-weight="bold">9</text>
 <!-- iTunes -->
 <circle cx="649.5" cy="776" r="14" fill="#fafafa" stroke="#d070d0" stroke-width="1"/>
 <path d="M646 783 V770 L655 768 V780" fill="none" stroke="#c050e0" stroke-width="1.8"/>
 <circle cx="644" cy="783" r="2.5" fill="#a060e0"/><circle cx="653" cy="781" r="2.5" fill="#5070e0"/>
 <!-- iBooks -->
 <circle cx="684.5" cy="776" r="14" fill="#f07a20"/>
 <path d="M676 770 C679 769 682 769 684 771 V783 C682 781 679 781 676 782Z M693 770 C690 769 687 769 685 771 V783 C687 781 690 781 693 782Z" fill="#fafafa"/>
 <!-- App Store -->
 <circle cx="719.5" cy="776" r="14" fill="url(#sf)" stroke="#e8f0f8" stroke-width="0.8"/>
 <path d="M713 785 L720 768 L727 785 M711 780 H729" fill="none" stroke="#fff" stroke-width="1.8"/>
 <circle cx="731" cy="766" r="5.5" fill="#e83a30"/>
 <text x="731" y="768.5" text-anchor="middle" font-size="7" fill="#fff" font-family="Liberation Sans" font-weight="bold">1</text>
 <!-- System Prefs -->
 <rect x="741" y="763" width="27" height="27" rx="4" fill="#8a8a8a"/>
 <circle cx="754.5" cy="776.5" r="11" fill="#3a3a3a"/>
 <circle cx="754.5" cy="776.5" r="8" fill="none" stroke="#c8c8c8" stroke-width="2.5" stroke-dasharray="2.5 1.5"/>
 <circle cx="754.5" cy="776.5" r="5" fill="#9a9a9a"/>
 <circle cx="754.5" cy="776.5" r="2" fill="#3a3a3a"/>
 <!-- OneDrive -->
 <path d="M776 785 C771 785 771 777 777 777 C778 771 786 770 789 774 C793 771 799 773 799 778 C804 778 805 785 800 785Z" fill="#2a8ae0" stroke="#e0f0ff" stroke-width="1"/>
 <path d="M782 789 C778 789 778 782 783 782 C785 777 792 776 795 780 C799 778 804 780 804 784 C807 784 807 789 804 789Z" fill="#1a7ad8" stroke="#e0f0ff" stroke-width="1"/>
 <!-- Pages -->
 <g transform="rotate(-5 824 776)"><rect x="812" y="764" width="24" height="26" fill="#faf6ee"/><rect x="815" y="769" width="8" height="6" fill="#4a8ad0"/><path d="M815 778H833M815 781H833M815 784H830" stroke="#ccc" stroke-width="0.6"/></g>
 <path d="M832 765 L826 787" stroke="#e0a040" stroke-width="2.2"/>
 <!-- WhatsApp -->
 <circle cx="859" cy="776" r="13" fill="#2ec05a" stroke="#f0f0f0" stroke-width="2"/>
 <path d="M847 789 L849 782 L853 786Z" fill="#f0f0f0"/>
 <path d="M854 770 C853 775 857 781 863 782 L865 779 L862 777 L860 778 C858 777 857 775 856 773 L857 771 L855 768Z" fill="#fafafa"/>
 <circle cx="869" cy="766" r="5.5" fill="#e83a30"/>
 <text x="869" y="768.5" text-anchor="middle" font-size="7" fill="#fff" font-family="Liberation Sans" font-weight="bold">5</text>
 <circle cx="859" cy="795" r="1.5" fill="#111"/>
 <!-- Chrome -->
 <circle cx="894" cy="776" r="14" fill="#e0433a"/>
 <path d="M894 776 L882 783 A14 14 0 0 0 901 788Z" fill="#2da94f"/>
 <path d="M894 776 L901 788 A14 14 0 0 0 907 769 L894 769Z" fill="#fbc02d"/>
 <circle cx="894" cy="776" r="6" fill="#f4f4f4"/>
 <circle cx="894" cy="776" r="4.6" fill="#4a88e8"/>
 <circle cx="894" cy="795" r="1.5" fill="#111"/>
 <!-- Ai -->
 <rect x="915" y="762" width="29" height="28" fill="#2a1608" stroke="#d87a30" stroke-width="1.2"/>
 <text x="929.5" y="783" text-anchor="middle" font-size="15" fill="#f08a3a" font-family="Liberation Sans">Ai</text>
 <circle cx="929" cy="795" r="1.5" fill="#111"/>
 <!-- document -->
 <rect x="970" y="762" width="21" height="28" fill="#fafafa"/>
 <path d="M973 770H988M976 773H985M978 776H983M980 770V786" stroke="#555" stroke-width="0.6"/>
 <!-- folder -->
 <path d="M1001 766 H1012 L1014 768 H1029 V790 H1001Z" fill="#5ab0e8"/>
 <rect x="1003" y="762" width="24" height="7" fill="#7a1a1a"/>
 <path d="M1001 770 H1029 V790 H1001Z" fill="#78c4f0"/>
 <!-- trash -->
 <path d="M1039 765 H1062 L1059 790 H1042Z" fill="#e0e4e8" stroke="#bbb" stroke-width="0.6"/>
 <ellipse cx="1050.5" cy="766" rx="11.5" ry="3" fill="#c8ccd0"/>
 <path d="M1043 764 L1048 767 L1053 763 L1058 766" stroke="#777" stroke-width="1.2" fill="none"/>
</svg>
</body></html>
